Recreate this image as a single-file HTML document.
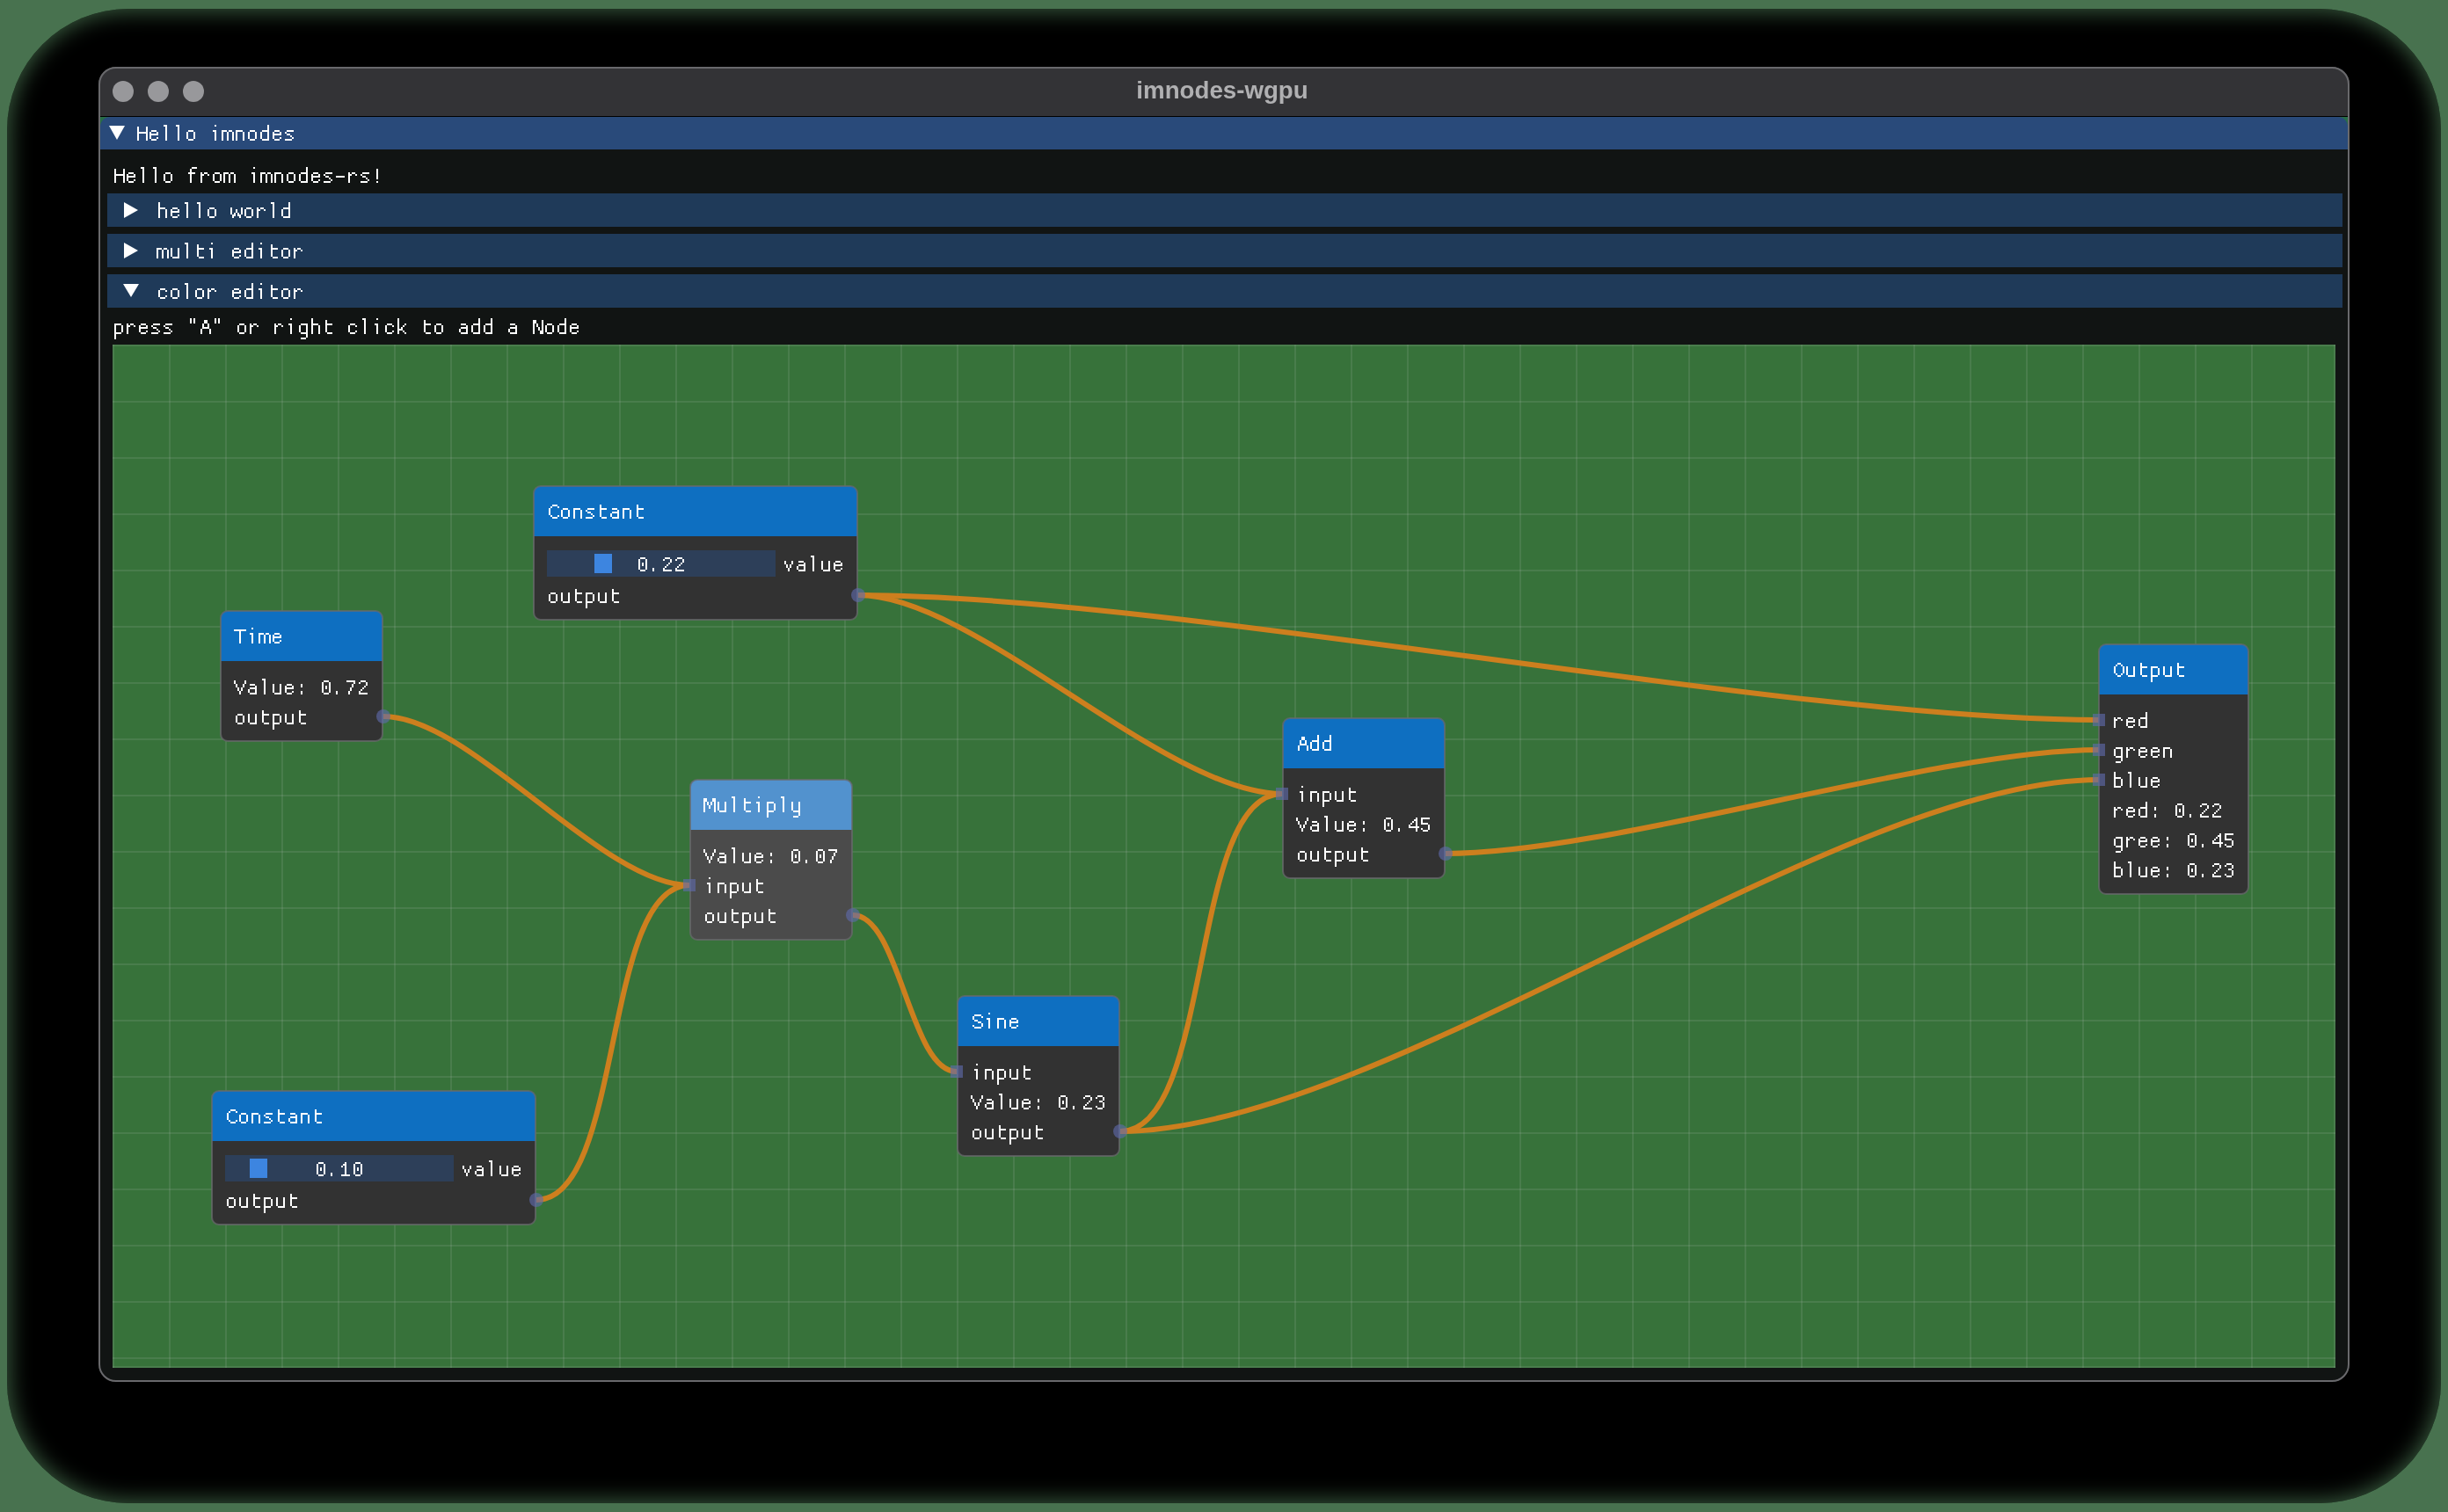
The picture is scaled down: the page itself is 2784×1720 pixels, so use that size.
<!DOCTYPE html><html><head><meta charset="utf-8"><style>
html,body{margin:0;padding:0;width:2784px;height:1720px;overflow:hidden;background:rgb(72,114,79);position:relative}
.r{position:absolute}

</style></head><body>
<div class="r" style="left:8px;top:10px;width:2768px;height:1700px;background:#000;border-radius:138px;box-shadow:inset 0 0 26px 2px rgba(72,114,79,0.85)"></div>
<div class="r" style="left:112px;top:76px;width:2560px;height:1496px;border-radius:20px;overflow:hidden;background:rgb(17,20,19)">
<div class="r" style="left:0;top:0;width:2560px;height:56px;background:rgb(51,51,54)"></div>
<div class="r" style="left:0;top:56px;width:2560px;height:1px;background:#000"></div>
<div class="r" style="left:16px;top:16px;width:24px;height:24px;border-radius:12px;background:rgb(152,152,155)"></div>
<div class="r" style="left:56px;top:16px;width:24px;height:24px;border-radius:12px;background:rgb(152,152,155)"></div>
<div class="r" style="left:96px;top:16px;width:24px;height:24px;border-radius:12px;background:rgb(152,152,155)"></div>
<div class="r" style="left:0;top:12px;width:2560px;text-align:center;font-family:'Liberation Sans',sans-serif;font-weight:bold;font-size:27.7px;line-height:30px;color:rgb(176,176,178);will-change:transform"><span style="position:relative;left:-2px">imnodes-wgpu</span></div>
<div class="r" style="left:0;top:57px;width:2560px;height:20px;background:rgb(40,110,70)"></div>
<div class="r" style="left:2px;top:57px;width:2556px;height:37px;background:rgb(41,74,122);border-radius:11px 11px 0 0"></div>
</div>
<div class="r" style="left:112px;top:76px;width:2556px;height:1492px;border:2px solid rgb(105,105,108);border-radius:20px"></div>
<svg class="r" style="left:124px;top:143px" width="18" height="16"><polygon points="0,0 18,0 9.0,16" fill="#fff"/></svg>
<svg class="r" style="left:154px;top:142px" width="182" height="24" shape-rendering="crispEdges"><path fill="#fff" d="M2 2h2v2h-2zM12 2h2v2h-2zM2 4h2v2h-2zM12 4h2v2h-2zM2 6h2v2h-2zM12 6h2v2h-2zM2 8h12v2h-12zM2 10h2v2h-2zM12 10h2v2h-2zM2 12h2v2h-2zM12 12h2v2h-2zM2 14h2v2h-2zM12 14h2v2h-2zM2 16h2v2h-2zM12 16h2v2h-2zM18 6h6v2h-6zM16 8h2v2h-2zM24 8h2v2h-2zM16 10h10v2h-10zM16 12h2v2h-2zM16 14h2v2h-2zM24 14h2v2h-2zM18 16h6v2h-6zM32 0h4v2h-4zM34 2h2v2h-2zM34 4h2v2h-2zM34 6h2v2h-2zM34 8h2v2h-2zM34 10h2v2h-2zM34 12h2v2h-2zM34 14h2v2h-2zM34 16h2v2h-2zM46 0h4v2h-4zM48 2h2v2h-2zM48 4h2v2h-2zM48 6h2v2h-2zM48 8h2v2h-2zM48 10h2v2h-2zM48 12h2v2h-2zM48 14h2v2h-2zM48 16h2v2h-2zM60 6h6v2h-6zM58 8h2v2h-2zM66 8h2v2h-2zM58 10h2v2h-2zM66 10h2v2h-2zM58 12h2v2h-2zM66 12h2v2h-2zM58 14h2v2h-2zM66 14h2v2h-2zM60 16h6v2h-6zM90 0h2v2h-2zM88 6h4v2h-4zM90 8h2v2h-2zM90 10h2v2h-2zM90 12h2v2h-2zM90 14h2v2h-2zM90 16h2v2h-2zM98 6h6v2h-6zM106 6h4v2h-4zM98 8h2v2h-2zM104 8h2v2h-2zM110 8h2v2h-2zM98 10h2v2h-2zM104 10h2v2h-2zM110 10h2v2h-2zM98 12h2v2h-2zM104 12h2v2h-2zM110 12h2v2h-2zM98 14h2v2h-2zM104 14h2v2h-2zM110 14h2v2h-2zM98 16h2v2h-2zM104 16h2v2h-2zM110 16h2v2h-2zM114 6h8v2h-8zM114 8h2v2h-2zM122 8h2v2h-2zM114 10h2v2h-2zM122 10h2v2h-2zM114 12h2v2h-2zM122 12h2v2h-2zM114 14h2v2h-2zM122 14h2v2h-2zM114 16h2v2h-2zM122 16h2v2h-2zM130 6h6v2h-6zM128 8h2v2h-2zM136 8h2v2h-2zM128 10h2v2h-2zM136 10h2v2h-2zM128 12h2v2h-2zM136 12h2v2h-2zM128 14h2v2h-2zM136 14h2v2h-2zM130 16h6v2h-6zM150 0h2v2h-2zM150 2h2v2h-2zM150 4h2v2h-2zM144 6h8v2h-8zM142 8h2v2h-2zM150 8h2v2h-2zM142 10h2v2h-2zM150 10h2v2h-2zM142 12h2v2h-2zM150 12h2v2h-2zM142 14h2v2h-2zM150 14h2v2h-2zM144 16h8v2h-8zM158 6h6v2h-6zM156 8h2v2h-2zM164 8h2v2h-2zM156 10h10v2h-10zM156 12h2v2h-2zM156 14h2v2h-2zM164 14h2v2h-2zM158 16h6v2h-6zM172 6h8v2h-8zM170 8h2v2h-2zM172 10h4v2h-4zM176 12h2v2h-2zM178 14h2v2h-2zM170 16h8v2h-8z"/></svg>
<svg class="r" style="left:128px;top:190px" width="308" height="24" shape-rendering="crispEdges"><path fill="#fff" d="M2 2h2v2h-2zM12 2h2v2h-2zM2 4h2v2h-2zM12 4h2v2h-2zM2 6h2v2h-2zM12 6h2v2h-2zM2 8h12v2h-12zM2 10h2v2h-2zM12 10h2v2h-2zM2 12h2v2h-2zM12 12h2v2h-2zM2 14h2v2h-2zM12 14h2v2h-2zM2 16h2v2h-2zM12 16h2v2h-2zM18 6h6v2h-6zM16 8h2v2h-2zM24 8h2v2h-2zM16 10h10v2h-10zM16 12h2v2h-2zM16 14h2v2h-2zM24 14h2v2h-2zM18 16h6v2h-6zM32 0h4v2h-4zM34 2h2v2h-2zM34 4h2v2h-2zM34 6h2v2h-2zM34 8h2v2h-2zM34 10h2v2h-2zM34 12h2v2h-2zM34 14h2v2h-2zM34 16h2v2h-2zM46 0h4v2h-4zM48 2h2v2h-2zM48 4h2v2h-2zM48 6h2v2h-2zM48 8h2v2h-2zM48 10h2v2h-2zM48 12h2v2h-2zM48 14h2v2h-2zM48 16h2v2h-2zM60 6h6v2h-6zM58 8h2v2h-2zM66 8h2v2h-2zM58 10h2v2h-2zM66 10h2v2h-2zM58 12h2v2h-2zM66 12h2v2h-2zM58 14h2v2h-2zM66 14h2v2h-2zM60 16h6v2h-6zM90 0h6v2h-6zM88 2h2v2h-2zM88 4h2v2h-2zM86 6h8v2h-8zM88 8h2v2h-2zM88 10h2v2h-2zM88 12h2v2h-2zM88 14h2v2h-2zM88 16h2v2h-2zM100 6h2v2h-2zM104 6h4v2h-4zM100 8h4v2h-4zM108 8h2v2h-2zM100 10h2v2h-2zM100 12h2v2h-2zM100 14h2v2h-2zM100 16h2v2h-2zM116 6h6v2h-6zM114 8h2v2h-2zM122 8h2v2h-2zM114 10h2v2h-2zM122 10h2v2h-2zM114 12h2v2h-2zM122 12h2v2h-2zM114 14h2v2h-2zM122 14h2v2h-2zM116 16h6v2h-6zM126 6h6v2h-6zM134 6h4v2h-4zM126 8h2v2h-2zM132 8h2v2h-2zM138 8h2v2h-2zM126 10h2v2h-2zM132 10h2v2h-2zM138 10h2v2h-2zM126 12h2v2h-2zM132 12h2v2h-2zM138 12h2v2h-2zM126 14h2v2h-2zM132 14h2v2h-2zM138 14h2v2h-2zM126 16h2v2h-2zM132 16h2v2h-2zM138 16h2v2h-2zM160 0h2v2h-2zM158 6h4v2h-4zM160 8h2v2h-2zM160 10h2v2h-2zM160 12h2v2h-2zM160 14h2v2h-2zM160 16h2v2h-2zM168 6h6v2h-6zM176 6h4v2h-4zM168 8h2v2h-2zM174 8h2v2h-2zM180 8h2v2h-2zM168 10h2v2h-2zM174 10h2v2h-2zM180 10h2v2h-2zM168 12h2v2h-2zM174 12h2v2h-2zM180 12h2v2h-2zM168 14h2v2h-2zM174 14h2v2h-2zM180 14h2v2h-2zM168 16h2v2h-2zM174 16h2v2h-2zM180 16h2v2h-2zM184 6h8v2h-8zM184 8h2v2h-2zM192 8h2v2h-2zM184 10h2v2h-2zM192 10h2v2h-2zM184 12h2v2h-2zM192 12h2v2h-2zM184 14h2v2h-2zM192 14h2v2h-2zM184 16h2v2h-2zM192 16h2v2h-2zM200 6h6v2h-6zM198 8h2v2h-2zM206 8h2v2h-2zM198 10h2v2h-2zM206 10h2v2h-2zM198 12h2v2h-2zM206 12h2v2h-2zM198 14h2v2h-2zM206 14h2v2h-2zM200 16h6v2h-6zM220 0h2v2h-2zM220 2h2v2h-2zM220 4h2v2h-2zM214 6h8v2h-8zM212 8h2v2h-2zM220 8h2v2h-2zM212 10h2v2h-2zM220 10h2v2h-2zM212 12h2v2h-2zM220 12h2v2h-2zM212 14h2v2h-2zM220 14h2v2h-2zM214 16h8v2h-8zM228 6h6v2h-6zM226 8h2v2h-2zM234 8h2v2h-2zM226 10h10v2h-10zM226 12h2v2h-2zM226 14h2v2h-2zM234 14h2v2h-2zM228 16h6v2h-6zM242 6h8v2h-8zM240 8h2v2h-2zM242 10h4v2h-4zM246 12h2v2h-2zM248 14h2v2h-2zM240 16h8v2h-8zM254 10h10v2h-10zM268 6h2v2h-2zM272 6h4v2h-4zM268 8h4v2h-4zM276 8h2v2h-2zM268 10h2v2h-2zM268 12h2v2h-2zM268 14h2v2h-2zM268 16h2v2h-2zM284 6h8v2h-8zM282 8h2v2h-2zM284 10h4v2h-4zM288 12h2v2h-2zM290 14h2v2h-2zM282 16h8v2h-8zM300 2h2v2h-2zM300 4h2v2h-2zM300 6h2v2h-2zM300 8h2v2h-2zM300 10h2v2h-2zM300 12h2v2h-2zM300 16h2v2h-2z"/></svg>
<div class="r" style="left:122px;top:220px;width:2542px;height:38px;background:rgb(31,58,89);"></div>
<svg class="r" style="left:141px;top:230px" width="16" height="18"><polygon points="0,0 16,9.0 0,18" fill="#fff"/></svg>
<svg class="r" style="left:178px;top:230px" width="154" height="24" shape-rendering="crispEdges"><path fill="#fff" d="M2 0h2v2h-2zM2 2h2v2h-2zM2 4h2v2h-2zM2 6h8v2h-8zM2 8h2v2h-2zM10 8h2v2h-2zM2 10h2v2h-2zM10 10h2v2h-2zM2 12h2v2h-2zM10 12h2v2h-2zM2 14h2v2h-2zM10 14h2v2h-2zM2 16h2v2h-2zM10 16h2v2h-2zM18 6h6v2h-6zM16 8h2v2h-2zM24 8h2v2h-2zM16 10h10v2h-10zM16 12h2v2h-2zM16 14h2v2h-2zM24 14h2v2h-2zM18 16h6v2h-6zM32 0h4v2h-4zM34 2h2v2h-2zM34 4h2v2h-2zM34 6h2v2h-2zM34 8h2v2h-2zM34 10h2v2h-2zM34 12h2v2h-2zM34 14h2v2h-2zM34 16h2v2h-2zM46 0h4v2h-4zM48 2h2v2h-2zM48 4h2v2h-2zM48 6h2v2h-2zM48 8h2v2h-2zM48 10h2v2h-2zM48 12h2v2h-2zM48 14h2v2h-2zM48 16h2v2h-2zM60 6h6v2h-6zM58 8h2v2h-2zM66 8h2v2h-2zM58 10h2v2h-2zM66 10h2v2h-2zM58 12h2v2h-2zM66 12h2v2h-2zM58 14h2v2h-2zM66 14h2v2h-2zM60 16h6v2h-6zM84 6h2v2h-2zM96 6h2v2h-2zM84 8h2v2h-2zM90 8h2v2h-2zM96 8h2v2h-2zM84 10h2v2h-2zM90 10h2v2h-2zM96 10h2v2h-2zM84 12h2v2h-2zM88 12h2v2h-2zM92 12h2v2h-2zM96 12h2v2h-2zM86 14h4v2h-4zM92 14h4v2h-4zM86 16h2v2h-2zM94 16h2v2h-2zM102 6h6v2h-6zM100 8h2v2h-2zM108 8h2v2h-2zM100 10h2v2h-2zM108 10h2v2h-2zM100 12h2v2h-2zM108 12h2v2h-2zM100 14h2v2h-2zM108 14h2v2h-2zM102 16h6v2h-6zM114 6h2v2h-2zM118 6h4v2h-4zM114 8h4v2h-4zM122 8h2v2h-2zM114 10h2v2h-2zM114 12h2v2h-2zM114 14h2v2h-2zM114 16h2v2h-2zM130 0h4v2h-4zM132 2h2v2h-2zM132 4h2v2h-2zM132 6h2v2h-2zM132 8h2v2h-2zM132 10h2v2h-2zM132 12h2v2h-2zM132 14h2v2h-2zM132 16h2v2h-2zM150 0h2v2h-2zM150 2h2v2h-2zM150 4h2v2h-2zM144 6h8v2h-8zM142 8h2v2h-2zM150 8h2v2h-2zM142 10h2v2h-2zM150 10h2v2h-2zM142 12h2v2h-2zM150 12h2v2h-2zM142 14h2v2h-2zM150 14h2v2h-2zM144 16h8v2h-8z"/></svg>
<div class="r" style="left:122px;top:266px;width:2542px;height:38px;background:rgb(31,58,89);"></div>
<svg class="r" style="left:141px;top:276px" width="16" height="18"><polygon points="0,0 16,9.0 0,18" fill="#fff"/></svg>
<svg class="r" style="left:178px;top:276px" width="168" height="24" shape-rendering="crispEdges"><path fill="#fff" d="M0 6h6v2h-6zM8 6h4v2h-4zM0 8h2v2h-2zM6 8h2v2h-2zM12 8h2v2h-2zM0 10h2v2h-2zM6 10h2v2h-2zM12 10h2v2h-2zM0 12h2v2h-2zM6 12h2v2h-2zM12 12h2v2h-2zM0 14h2v2h-2zM6 14h2v2h-2zM12 14h2v2h-2zM0 16h2v2h-2zM6 16h2v2h-2zM12 16h2v2h-2zM16 6h2v2h-2zM24 6h2v2h-2zM16 8h2v2h-2zM24 8h2v2h-2zM16 10h2v2h-2zM24 10h2v2h-2zM16 12h2v2h-2zM24 12h2v2h-2zM16 14h2v2h-2zM24 14h2v2h-2zM18 16h8v2h-8zM32 0h4v2h-4zM34 2h2v2h-2zM34 4h2v2h-2zM34 6h2v2h-2zM34 8h2v2h-2zM34 10h2v2h-2zM34 12h2v2h-2zM34 14h2v2h-2zM34 16h2v2h-2zM46 2h2v2h-2zM46 4h2v2h-2zM46 6h8v2h-8zM46 8h2v2h-2zM46 10h2v2h-2zM46 12h2v2h-2zM46 14h2v2h-2zM48 16h6v2h-6zM62 0h2v2h-2zM60 6h4v2h-4zM62 8h2v2h-2zM62 10h2v2h-2zM62 12h2v2h-2zM62 14h2v2h-2zM62 16h2v2h-2zM88 6h6v2h-6zM86 8h2v2h-2zM94 8h2v2h-2zM86 10h10v2h-10zM86 12h2v2h-2zM86 14h2v2h-2zM94 14h2v2h-2zM88 16h6v2h-6zM108 0h2v2h-2zM108 2h2v2h-2zM108 4h2v2h-2zM102 6h8v2h-8zM100 8h2v2h-2zM108 8h2v2h-2zM100 10h2v2h-2zM108 10h2v2h-2zM100 12h2v2h-2zM108 12h2v2h-2zM100 14h2v2h-2zM108 14h2v2h-2zM102 16h8v2h-8zM118 0h2v2h-2zM116 6h4v2h-4zM118 8h2v2h-2zM118 10h2v2h-2zM118 12h2v2h-2zM118 14h2v2h-2zM118 16h2v2h-2zM130 2h2v2h-2zM130 4h2v2h-2zM130 6h8v2h-8zM130 8h2v2h-2zM130 10h2v2h-2zM130 12h2v2h-2zM130 14h2v2h-2zM132 16h6v2h-6zM144 6h6v2h-6zM142 8h2v2h-2zM150 8h2v2h-2zM142 10h2v2h-2zM150 10h2v2h-2zM142 12h2v2h-2zM150 12h2v2h-2zM142 14h2v2h-2zM150 14h2v2h-2zM144 16h6v2h-6zM156 6h2v2h-2zM160 6h4v2h-4zM156 8h4v2h-4zM164 8h2v2h-2zM156 10h2v2h-2zM156 12h2v2h-2zM156 14h2v2h-2zM156 16h2v2h-2z"/></svg>
<div class="r" style="left:122px;top:312px;width:2542px;height:38px;background:rgb(31,58,89);"></div>
<svg class="r" style="left:140px;top:323px" width="18" height="15"><polygon points="0,0 18,0 9.0,15" fill="#fff"/></svg>
<svg class="r" style="left:178px;top:322px" width="168" height="24" shape-rendering="crispEdges"><path fill="#fff" d="M4 6h6v2h-6zM2 8h2v2h-2zM10 8h2v2h-2zM2 10h2v2h-2zM2 12h2v2h-2zM2 14h2v2h-2zM10 14h2v2h-2zM4 16h6v2h-6zM18 6h6v2h-6zM16 8h2v2h-2zM24 8h2v2h-2zM16 10h2v2h-2zM24 10h2v2h-2zM16 12h2v2h-2zM24 12h2v2h-2zM16 14h2v2h-2zM24 14h2v2h-2zM18 16h6v2h-6zM32 0h4v2h-4zM34 2h2v2h-2zM34 4h2v2h-2zM34 6h2v2h-2zM34 8h2v2h-2zM34 10h2v2h-2zM34 12h2v2h-2zM34 14h2v2h-2zM34 16h2v2h-2zM46 6h6v2h-6zM44 8h2v2h-2zM52 8h2v2h-2zM44 10h2v2h-2zM52 10h2v2h-2zM44 12h2v2h-2zM52 12h2v2h-2zM44 14h2v2h-2zM52 14h2v2h-2zM46 16h6v2h-6zM58 6h2v2h-2zM62 6h4v2h-4zM58 8h4v2h-4zM66 8h2v2h-2zM58 10h2v2h-2zM58 12h2v2h-2zM58 14h2v2h-2zM58 16h2v2h-2zM88 6h6v2h-6zM86 8h2v2h-2zM94 8h2v2h-2zM86 10h10v2h-10zM86 12h2v2h-2zM86 14h2v2h-2zM94 14h2v2h-2zM88 16h6v2h-6zM108 0h2v2h-2zM108 2h2v2h-2zM108 4h2v2h-2zM102 6h8v2h-8zM100 8h2v2h-2zM108 8h2v2h-2zM100 10h2v2h-2zM108 10h2v2h-2zM100 12h2v2h-2zM108 12h2v2h-2zM100 14h2v2h-2zM108 14h2v2h-2zM102 16h8v2h-8zM118 0h2v2h-2zM116 6h4v2h-4zM118 8h2v2h-2zM118 10h2v2h-2zM118 12h2v2h-2zM118 14h2v2h-2zM118 16h2v2h-2zM130 2h2v2h-2zM130 4h2v2h-2zM130 6h8v2h-8zM130 8h2v2h-2zM130 10h2v2h-2zM130 12h2v2h-2zM130 14h2v2h-2zM132 16h6v2h-6zM144 6h6v2h-6zM142 8h2v2h-2zM150 8h2v2h-2zM142 10h2v2h-2zM150 10h2v2h-2zM142 12h2v2h-2zM150 12h2v2h-2zM142 14h2v2h-2zM150 14h2v2h-2zM144 16h6v2h-6zM156 6h2v2h-2zM160 6h4v2h-4zM156 8h4v2h-4zM164 8h2v2h-2zM156 10h2v2h-2zM156 12h2v2h-2zM156 14h2v2h-2zM156 16h2v2h-2z"/></svg>
<svg class="r" style="left:128px;top:362px" width="532" height="24" shape-rendering="crispEdges"><path fill="#fff" d="M2 6h8v2h-8zM2 8h2v2h-2zM10 8h2v2h-2zM2 10h2v2h-2zM10 10h2v2h-2zM2 12h2v2h-2zM10 12h2v2h-2zM2 14h2v2h-2zM10 14h2v2h-2zM2 16h8v2h-8zM2 18h2v2h-2zM2 20h2v2h-2zM2 22h2v2h-2zM16 6h2v2h-2zM20 6h4v2h-4zM16 8h4v2h-4zM24 8h2v2h-2zM16 10h2v2h-2zM16 12h2v2h-2zM16 14h2v2h-2zM16 16h2v2h-2zM32 6h6v2h-6zM30 8h2v2h-2zM38 8h2v2h-2zM30 10h10v2h-10zM30 12h2v2h-2zM30 14h2v2h-2zM38 14h2v2h-2zM32 16h6v2h-6zM46 6h8v2h-8zM44 8h2v2h-2zM46 10h4v2h-4zM50 12h2v2h-2zM52 14h2v2h-2zM44 16h8v2h-8zM60 6h8v2h-8zM58 8h2v2h-2zM60 10h4v2h-4zM64 12h2v2h-2zM66 14h2v2h-2zM58 16h8v2h-8zM88 0h2v2h-2zM92 0h2v2h-2zM88 2h2v2h-2zM92 2h2v2h-2zM88 4h2v2h-2zM92 4h2v2h-2zM104 2h4v2h-4zM104 4h4v2h-4zM102 6h2v2h-2zM108 6h2v2h-2zM102 8h2v2h-2zM108 8h2v2h-2zM102 10h8v2h-8zM100 12h2v2h-2zM110 12h2v2h-2zM100 14h2v2h-2zM110 14h2v2h-2zM100 16h2v2h-2zM110 16h2v2h-2zM116 0h2v2h-2zM120 0h2v2h-2zM116 2h2v2h-2zM120 2h2v2h-2zM116 4h2v2h-2zM120 4h2v2h-2zM144 6h6v2h-6zM142 8h2v2h-2zM150 8h2v2h-2zM142 10h2v2h-2zM150 10h2v2h-2zM142 12h2v2h-2zM150 12h2v2h-2zM142 14h2v2h-2zM150 14h2v2h-2zM144 16h6v2h-6zM156 6h2v2h-2zM160 6h4v2h-4zM156 8h4v2h-4zM164 8h2v2h-2zM156 10h2v2h-2zM156 12h2v2h-2zM156 14h2v2h-2zM156 16h2v2h-2zM184 6h2v2h-2zM188 6h4v2h-4zM184 8h4v2h-4zM192 8h2v2h-2zM184 10h2v2h-2zM184 12h2v2h-2zM184 14h2v2h-2zM184 16h2v2h-2zM202 0h2v2h-2zM200 6h4v2h-4zM202 8h2v2h-2zM202 10h2v2h-2zM202 12h2v2h-2zM202 14h2v2h-2zM202 16h2v2h-2zM214 6h8v2h-8zM212 8h2v2h-2zM220 8h2v2h-2zM212 10h2v2h-2zM220 10h2v2h-2zM212 12h2v2h-2zM220 12h2v2h-2zM212 14h2v2h-2zM220 14h2v2h-2zM214 16h8v2h-8zM220 18h2v2h-2zM220 20h2v2h-2zM214 22h6v2h-6zM226 0h2v2h-2zM226 2h2v2h-2zM226 4h2v2h-2zM226 6h8v2h-8zM226 8h2v2h-2zM234 8h2v2h-2zM226 10h2v2h-2zM234 10h2v2h-2zM226 12h2v2h-2zM234 12h2v2h-2zM226 14h2v2h-2zM234 14h2v2h-2zM226 16h2v2h-2zM234 16h2v2h-2zM242 2h2v2h-2zM242 4h2v2h-2zM242 6h8v2h-8zM242 8h2v2h-2zM242 10h2v2h-2zM242 12h2v2h-2zM242 14h2v2h-2zM244 16h6v2h-6zM270 6h6v2h-6zM268 8h2v2h-2zM276 8h2v2h-2zM268 10h2v2h-2zM268 12h2v2h-2zM268 14h2v2h-2zM276 14h2v2h-2zM270 16h6v2h-6zM284 0h4v2h-4zM286 2h2v2h-2zM286 4h2v2h-2zM286 6h2v2h-2zM286 8h2v2h-2zM286 10h2v2h-2zM286 12h2v2h-2zM286 14h2v2h-2zM286 16h2v2h-2zM300 0h2v2h-2zM298 6h4v2h-4zM300 8h2v2h-2zM300 10h2v2h-2zM300 12h2v2h-2zM300 14h2v2h-2zM300 16h2v2h-2zM312 6h6v2h-6zM310 8h2v2h-2zM318 8h2v2h-2zM310 10h2v2h-2zM310 12h2v2h-2zM310 14h2v2h-2zM318 14h2v2h-2zM312 16h6v2h-6zM324 0h2v2h-2zM324 2h2v2h-2zM324 4h2v2h-2zM324 6h2v2h-2zM332 6h2v2h-2zM324 8h2v2h-2zM330 8h2v2h-2zM324 10h2v2h-2zM328 10h2v2h-2zM324 12h6v2h-6zM324 14h2v2h-2zM330 14h2v2h-2zM324 16h2v2h-2zM332 16h2v2h-2zM354 2h2v2h-2zM354 4h2v2h-2zM354 6h8v2h-8zM354 8h2v2h-2zM354 10h2v2h-2zM354 12h2v2h-2zM354 14h2v2h-2zM356 16h6v2h-6zM368 6h6v2h-6zM366 8h2v2h-2zM374 8h2v2h-2zM366 10h2v2h-2zM374 10h2v2h-2zM366 12h2v2h-2zM374 12h2v2h-2zM366 14h2v2h-2zM374 14h2v2h-2zM368 16h6v2h-6zM396 6h6v2h-6zM402 8h2v2h-2zM396 10h8v2h-8zM394 12h2v2h-2zM402 12h2v2h-2zM394 14h2v2h-2zM402 14h2v2h-2zM396 16h8v2h-8zM416 0h2v2h-2zM416 2h2v2h-2zM416 4h2v2h-2zM410 6h8v2h-8zM408 8h2v2h-2zM416 8h2v2h-2zM408 10h2v2h-2zM416 10h2v2h-2zM408 12h2v2h-2zM416 12h2v2h-2zM408 14h2v2h-2zM416 14h2v2h-2zM410 16h8v2h-8zM430 0h2v2h-2zM430 2h2v2h-2zM430 4h2v2h-2zM424 6h8v2h-8zM422 8h2v2h-2zM430 8h2v2h-2zM422 10h2v2h-2zM430 10h2v2h-2zM422 12h2v2h-2zM430 12h2v2h-2zM422 14h2v2h-2zM430 14h2v2h-2zM424 16h8v2h-8zM452 6h6v2h-6zM458 8h2v2h-2zM452 10h8v2h-8zM450 12h2v2h-2zM458 12h2v2h-2zM450 14h2v2h-2zM458 14h2v2h-2zM452 16h8v2h-8zM478 2h4v2h-4zM488 2h2v2h-2zM478 4h4v2h-4zM488 4h2v2h-2zM478 6h2v2h-2zM482 6h2v2h-2zM488 6h2v2h-2zM478 8h2v2h-2zM482 8h2v2h-2zM488 8h2v2h-2zM478 10h2v2h-2zM484 10h2v2h-2zM488 10h2v2h-2zM478 12h2v2h-2zM484 12h2v2h-2zM488 12h2v2h-2zM478 14h2v2h-2zM486 14h4v2h-4zM478 16h2v2h-2zM486 16h4v2h-4zM494 6h6v2h-6zM492 8h2v2h-2zM500 8h2v2h-2zM492 10h2v2h-2zM500 10h2v2h-2zM492 12h2v2h-2zM500 12h2v2h-2zM492 14h2v2h-2zM500 14h2v2h-2zM494 16h6v2h-6zM514 0h2v2h-2zM514 2h2v2h-2zM514 4h2v2h-2zM508 6h8v2h-8zM506 8h2v2h-2zM514 8h2v2h-2zM506 10h2v2h-2zM514 10h2v2h-2zM506 12h2v2h-2zM514 12h2v2h-2zM506 14h2v2h-2zM514 14h2v2h-2zM508 16h8v2h-8zM522 6h6v2h-6zM520 8h2v2h-2zM528 8h2v2h-2zM520 10h10v2h-10zM520 12h2v2h-2zM520 14h2v2h-2zM528 14h2v2h-2zM522 16h6v2h-6z"/></svg>
<svg class="r" style="left:128px;top:392px" width="2528" height="1164"><rect x="0" y="0" width="2528" height="1164" fill="rgb(55,114,58)"/><rect x="0" y="0" width="2" height="1164" fill="rgba(200,200,200,0.13)"/><rect x="64" y="0" width="2" height="1164" fill="rgba(200,200,200,0.13)"/><rect x="128" y="0" width="2" height="1164" fill="rgba(200,200,200,0.13)"/><rect x="192" y="0" width="2" height="1164" fill="rgba(200,200,200,0.13)"/><rect x="256" y="0" width="2" height="1164" fill="rgba(200,200,200,0.13)"/><rect x="320" y="0" width="2" height="1164" fill="rgba(200,200,200,0.13)"/><rect x="384" y="0" width="2" height="1164" fill="rgba(200,200,200,0.13)"/><rect x="448" y="0" width="2" height="1164" fill="rgba(200,200,200,0.13)"/><rect x="512" y="0" width="2" height="1164" fill="rgba(200,200,200,0.13)"/><rect x="576" y="0" width="2" height="1164" fill="rgba(200,200,200,0.13)"/><rect x="640" y="0" width="2" height="1164" fill="rgba(200,200,200,0.13)"/><rect x="704" y="0" width="2" height="1164" fill="rgba(200,200,200,0.13)"/><rect x="768" y="0" width="2" height="1164" fill="rgba(200,200,200,0.13)"/><rect x="832" y="0" width="2" height="1164" fill="rgba(200,200,200,0.13)"/><rect x="896" y="0" width="2" height="1164" fill="rgba(200,200,200,0.13)"/><rect x="960" y="0" width="2" height="1164" fill="rgba(200,200,200,0.13)"/><rect x="1024" y="0" width="2" height="1164" fill="rgba(200,200,200,0.13)"/><rect x="1088" y="0" width="2" height="1164" fill="rgba(200,200,200,0.13)"/><rect x="1152" y="0" width="2" height="1164" fill="rgba(200,200,200,0.13)"/><rect x="1216" y="0" width="2" height="1164" fill="rgba(200,200,200,0.13)"/><rect x="1280" y="0" width="2" height="1164" fill="rgba(200,200,200,0.13)"/><rect x="1344" y="0" width="2" height="1164" fill="rgba(200,200,200,0.13)"/><rect x="1408" y="0" width="2" height="1164" fill="rgba(200,200,200,0.13)"/><rect x="1472" y="0" width="2" height="1164" fill="rgba(200,200,200,0.13)"/><rect x="1536" y="0" width="2" height="1164" fill="rgba(200,200,200,0.13)"/><rect x="1600" y="0" width="2" height="1164" fill="rgba(200,200,200,0.13)"/><rect x="1664" y="0" width="2" height="1164" fill="rgba(200,200,200,0.13)"/><rect x="1728" y="0" width="2" height="1164" fill="rgba(200,200,200,0.13)"/><rect x="1792" y="0" width="2" height="1164" fill="rgba(200,200,200,0.13)"/><rect x="1856" y="0" width="2" height="1164" fill="rgba(200,200,200,0.13)"/><rect x="1920" y="0" width="2" height="1164" fill="rgba(200,200,200,0.13)"/><rect x="1984" y="0" width="2" height="1164" fill="rgba(200,200,200,0.13)"/><rect x="2048" y="0" width="2" height="1164" fill="rgba(200,200,200,0.13)"/><rect x="2112" y="0" width="2" height="1164" fill="rgba(200,200,200,0.13)"/><rect x="2176" y="0" width="2" height="1164" fill="rgba(200,200,200,0.13)"/><rect x="2240" y="0" width="2" height="1164" fill="rgba(200,200,200,0.13)"/><rect x="2304" y="0" width="2" height="1164" fill="rgba(200,200,200,0.13)"/><rect x="2368" y="0" width="2" height="1164" fill="rgba(200,200,200,0.13)"/><rect x="2432" y="0" width="2" height="1164" fill="rgba(200,200,200,0.13)"/><rect x="2496" y="0" width="2" height="1164" fill="rgba(200,200,200,0.13)"/><rect x="0" y="0" width="2528" height="2" fill="rgba(200,200,200,0.13)"/><rect x="0" y="64" width="2528" height="2" fill="rgba(200,200,200,0.13)"/><rect x="0" y="128" width="2528" height="2" fill="rgba(200,200,200,0.13)"/><rect x="0" y="192" width="2528" height="2" fill="rgba(200,200,200,0.13)"/><rect x="0" y="256" width="2528" height="2" fill="rgba(200,200,200,0.13)"/><rect x="0" y="320" width="2528" height="2" fill="rgba(200,200,200,0.13)"/><rect x="0" y="384" width="2528" height="2" fill="rgba(200,200,200,0.13)"/><rect x="0" y="448" width="2528" height="2" fill="rgba(200,200,200,0.13)"/><rect x="0" y="512" width="2528" height="2" fill="rgba(200,200,200,0.13)"/><rect x="0" y="576" width="2528" height="2" fill="rgba(200,200,200,0.13)"/><rect x="0" y="640" width="2528" height="2" fill="rgba(200,200,200,0.13)"/><rect x="0" y="704" width="2528" height="2" fill="rgba(200,200,200,0.13)"/><rect x="0" y="768" width="2528" height="2" fill="rgba(200,200,200,0.13)"/><rect x="0" y="832" width="2528" height="2" fill="rgba(200,200,200,0.13)"/><rect x="0" y="896" width="2528" height="2" fill="rgba(200,200,200,0.13)"/><rect x="0" y="960" width="2528" height="2" fill="rgba(200,200,200,0.13)"/><rect x="0" y="1024" width="2528" height="2" fill="rgba(200,200,200,0.13)"/><rect x="0" y="1088" width="2528" height="2" fill="rgba(200,200,200,0.13)"/><rect x="0" y="1152" width="2528" height="2" fill="rgba(200,200,200,0.13)"/><rect x="2526" y="0" width="2" height="1164" fill="rgba(200,200,200,0.13)"/><rect x="0" y="1162" width="2528" height="2" fill="rgba(200,200,200,0.13)"/><path d="M848.0,285.0 C1202.5,285.0 1904.5,427.0 2259.0,427.0" stroke="rgb(205,127,30)" stroke-width="6" fill="none"/><path d="M848.0,285.0 C981.1,285.0 1196.9,511.0 1330.0,511.0" stroke="rgb(205,127,30)" stroke-width="6" fill="none"/><path d="M308.0,423.0 C407.4,423.0 556.6,615.0 656.0,615.0" stroke="rgb(205,127,30)" stroke-width="6" fill="none"/><path d="M482.0,973.0 C581.5,973.0 556.5,615.0 656.0,615.0" stroke="rgb(205,127,30)" stroke-width="6" fill="none"/><path d="M842.0,649.0 C895.4,649.0 906.6,827.0 960.0,827.0" stroke="rgb(205,127,30)" stroke-width="6" fill="none"/><path d="M1146.0,895.0 C1252.5,895.0 1223.5,511.0 1330.0,511.0" stroke="rgb(205,127,30)" stroke-width="6" fill="none"/><path d="M1146.0,895.0 C1441.7,895.0 1963.3,495.0 2259.0,495.0" stroke="rgb(205,127,30)" stroke-width="6" fill="none"/><path d="M1516.0,579.0 C1704.1,579.0 2070.9,461.0 2259.0,461.0" stroke="rgb(205,127,30)" stroke-width="6" fill="none"/></svg>
<div class="r" style="left:607px;top:553px;width:368px;height:152px;border-radius:8px;background:rgb(50,50,50);overflow:hidden"><div class="r" style="left:0;top:0;width:100%;height:57px;background:rgb(14,111,193)"></div></div>
<div class="r" style="left:606px;top:552px;width:366px;height:150px;border:2px solid rgba(105,105,110,0.72);border-radius:9px"></div>
<svg class="r" style="left:622px;top:572px" width="112" height="24" shape-rendering="crispEdges"><path fill="#fff" d="M6 2h6v2h-6zM4 4h2v2h-2zM12 4h2v2h-2zM2 6h2v2h-2zM2 8h2v2h-2zM2 10h2v2h-2zM2 12h2v2h-2zM4 14h2v2h-2zM12 14h2v2h-2zM6 16h6v2h-6zM18 6h6v2h-6zM16 8h2v2h-2zM24 8h2v2h-2zM16 10h2v2h-2zM24 10h2v2h-2zM16 12h2v2h-2zM24 12h2v2h-2zM16 14h2v2h-2zM24 14h2v2h-2zM18 16h6v2h-6zM30 6h8v2h-8zM30 8h2v2h-2zM38 8h2v2h-2zM30 10h2v2h-2zM38 10h2v2h-2zM30 12h2v2h-2zM38 12h2v2h-2zM30 14h2v2h-2zM38 14h2v2h-2zM30 16h2v2h-2zM38 16h2v2h-2zM46 6h8v2h-8zM44 8h2v2h-2zM46 10h4v2h-4zM50 12h2v2h-2zM52 14h2v2h-2zM44 16h8v2h-8zM60 2h2v2h-2zM60 4h2v2h-2zM60 6h8v2h-8zM60 8h2v2h-2zM60 10h2v2h-2zM60 12h2v2h-2zM60 14h2v2h-2zM62 16h6v2h-6zM74 6h6v2h-6zM80 8h2v2h-2zM74 10h8v2h-8zM72 12h2v2h-2zM80 12h2v2h-2zM72 14h2v2h-2zM80 14h2v2h-2zM74 16h8v2h-8zM86 6h8v2h-8zM86 8h2v2h-2zM94 8h2v2h-2zM86 10h2v2h-2zM94 10h2v2h-2zM86 12h2v2h-2zM94 12h2v2h-2zM86 14h2v2h-2zM94 14h2v2h-2zM86 16h2v2h-2zM94 16h2v2h-2zM102 2h2v2h-2zM102 4h2v2h-2zM102 6h8v2h-8zM102 8h2v2h-2zM102 10h2v2h-2zM102 12h2v2h-2zM102 14h2v2h-2zM104 16h6v2h-6z"/></svg>
<div class="r" style="left:622px;top:626px;width:260px;height:30px;background:rgb(45,63,89);"></div>
<div class="r" style="left:676px;top:630px;width:20px;height:22px;background:rgb(61,133,224);"></div>
<svg class="r" style="left:724px;top:632px" width="56" height="24" shape-rendering="crispEdges"><path fill="#fff" d="M4 2h6v2h-6zM2 4h2v2h-2zM10 4h2v2h-2zM2 6h2v2h-2zM10 6h2v2h-2zM2 8h2v2h-2zM6 8h2v2h-2zM10 8h2v2h-2zM2 10h2v2h-2zM6 10h2v2h-2zM10 10h2v2h-2zM2 12h2v2h-2zM10 12h2v2h-2zM2 14h2v2h-2zM10 14h2v2h-2zM4 16h6v2h-6zM18 14h2v2h-2zM18 16h2v2h-2zM32 2h6v2h-6zM30 4h2v2h-2zM38 4h2v2h-2zM38 6h2v2h-2zM36 8h2v2h-2zM34 10h2v2h-2zM32 12h2v2h-2zM30 14h2v2h-2zM30 16h10v2h-10zM46 2h6v2h-6zM44 4h2v2h-2zM52 4h2v2h-2zM52 6h2v2h-2zM50 8h2v2h-2zM48 10h2v2h-2zM46 12h2v2h-2zM44 14h2v2h-2zM44 16h10v2h-10z"/></svg>
<svg class="r" style="left:890px;top:632px" width="70" height="24" shape-rendering="crispEdges"><path fill="#fff" d="M2 6h2v2h-2zM10 6h2v2h-2zM2 8h2v2h-2zM10 8h2v2h-2zM4 10h2v2h-2zM8 10h2v2h-2zM4 12h2v2h-2zM8 12h2v2h-2zM6 14h2v2h-2zM6 16h2v2h-2zM18 6h6v2h-6zM24 8h2v2h-2zM18 10h8v2h-8zM16 12h2v2h-2zM24 12h2v2h-2zM16 14h2v2h-2zM24 14h2v2h-2zM18 16h8v2h-8zM32 0h4v2h-4zM34 2h2v2h-2zM34 4h2v2h-2zM34 6h2v2h-2zM34 8h2v2h-2zM34 10h2v2h-2zM34 12h2v2h-2zM34 14h2v2h-2zM34 16h2v2h-2zM44 6h2v2h-2zM52 6h2v2h-2zM44 8h2v2h-2zM52 8h2v2h-2zM44 10h2v2h-2zM52 10h2v2h-2zM44 12h2v2h-2zM52 12h2v2h-2zM44 14h2v2h-2zM52 14h2v2h-2zM46 16h8v2h-8zM60 6h6v2h-6zM58 8h2v2h-2zM66 8h2v2h-2zM58 10h10v2h-10zM58 12h2v2h-2zM58 14h2v2h-2zM66 14h2v2h-2zM60 16h6v2h-6z"/></svg>
<svg class="r" style="left:622px;top:668px" width="84" height="24" shape-rendering="crispEdges"><path fill="#fff" d="M4 6h6v2h-6zM2 8h2v2h-2zM10 8h2v2h-2zM2 10h2v2h-2zM10 10h2v2h-2zM2 12h2v2h-2zM10 12h2v2h-2zM2 14h2v2h-2zM10 14h2v2h-2zM4 16h6v2h-6zM16 6h2v2h-2zM24 6h2v2h-2zM16 8h2v2h-2zM24 8h2v2h-2zM16 10h2v2h-2zM24 10h2v2h-2zM16 12h2v2h-2zM24 12h2v2h-2zM16 14h2v2h-2zM24 14h2v2h-2zM18 16h8v2h-8zM32 2h2v2h-2zM32 4h2v2h-2zM32 6h8v2h-8zM32 8h2v2h-2zM32 10h2v2h-2zM32 12h2v2h-2zM32 14h2v2h-2zM34 16h6v2h-6zM44 6h8v2h-8zM44 8h2v2h-2zM52 8h2v2h-2zM44 10h2v2h-2zM52 10h2v2h-2zM44 12h2v2h-2zM52 12h2v2h-2zM44 14h2v2h-2zM52 14h2v2h-2zM44 16h8v2h-8zM44 18h2v2h-2zM44 20h2v2h-2zM44 22h2v2h-2zM58 6h2v2h-2zM66 6h2v2h-2zM58 8h2v2h-2zM66 8h2v2h-2zM58 10h2v2h-2zM66 10h2v2h-2zM58 12h2v2h-2zM66 12h2v2h-2zM58 14h2v2h-2zM66 14h2v2h-2zM60 16h8v2h-8zM74 2h2v2h-2zM74 4h2v2h-2zM74 6h8v2h-8zM74 8h2v2h-2zM74 10h2v2h-2zM74 12h2v2h-2zM74 14h2v2h-2zM76 16h6v2h-6z"/></svg>
<div class="r" style="left:251px;top:695px;width:184px;height:148px;border-radius:8px;background:rgb(50,50,50);overflow:hidden"><div class="r" style="left:0;top:0;width:100%;height:57px;background:rgb(14,111,193)"></div></div>
<div class="r" style="left:250px;top:694px;width:182px;height:146px;border:2px solid rgba(105,105,110,0.72);border-radius:9px"></div>
<svg class="r" style="left:266px;top:714px" width="56" height="24" shape-rendering="crispEdges"><path fill="#fff" d="M0 2h14v2h-14zM6 4h2v2h-2zM6 6h2v2h-2zM6 8h2v2h-2zM6 10h2v2h-2zM6 12h2v2h-2zM6 14h2v2h-2zM6 16h2v2h-2zM20 0h2v2h-2zM18 6h4v2h-4zM20 8h2v2h-2zM20 10h2v2h-2zM20 12h2v2h-2zM20 14h2v2h-2zM20 16h2v2h-2zM28 6h6v2h-6zM36 6h4v2h-4zM28 8h2v2h-2zM34 8h2v2h-2zM40 8h2v2h-2zM28 10h2v2h-2zM34 10h2v2h-2zM40 10h2v2h-2zM28 12h2v2h-2zM34 12h2v2h-2zM40 12h2v2h-2zM28 14h2v2h-2zM34 14h2v2h-2zM40 14h2v2h-2zM28 16h2v2h-2zM34 16h2v2h-2zM40 16h2v2h-2zM46 6h6v2h-6zM44 8h2v2h-2zM52 8h2v2h-2zM44 10h10v2h-10zM44 12h2v2h-2zM44 14h2v2h-2zM52 14h2v2h-2zM46 16h6v2h-6z"/></svg>
<svg class="r" style="left:266px;top:772px" width="154" height="24" shape-rendering="crispEdges"><path fill="#fff" d="M0 2h2v2h-2zM12 2h2v2h-2zM0 4h2v2h-2zM12 4h2v2h-2zM2 6h2v2h-2zM10 6h2v2h-2zM2 8h2v2h-2zM10 8h2v2h-2zM4 10h2v2h-2zM8 10h2v2h-2zM4 12h2v2h-2zM8 12h2v2h-2zM6 14h2v2h-2zM6 16h2v2h-2zM18 6h6v2h-6zM24 8h2v2h-2zM18 10h8v2h-8zM16 12h2v2h-2zM24 12h2v2h-2zM16 14h2v2h-2zM24 14h2v2h-2zM18 16h8v2h-8zM32 0h4v2h-4zM34 2h2v2h-2zM34 4h2v2h-2zM34 6h2v2h-2zM34 8h2v2h-2zM34 10h2v2h-2zM34 12h2v2h-2zM34 14h2v2h-2zM34 16h2v2h-2zM44 6h2v2h-2zM52 6h2v2h-2zM44 8h2v2h-2zM52 8h2v2h-2zM44 10h2v2h-2zM52 10h2v2h-2zM44 12h2v2h-2zM52 12h2v2h-2zM44 14h2v2h-2zM52 14h2v2h-2zM46 16h8v2h-8zM60 6h6v2h-6zM58 8h2v2h-2zM66 8h2v2h-2zM58 10h10v2h-10zM58 12h2v2h-2zM58 14h2v2h-2zM66 14h2v2h-2zM60 16h6v2h-6zM76 6h2v2h-2zM76 8h2v2h-2zM76 14h2v2h-2zM76 16h2v2h-2zM102 2h6v2h-6zM100 4h2v2h-2zM108 4h2v2h-2zM100 6h2v2h-2zM108 6h2v2h-2zM100 8h2v2h-2zM104 8h2v2h-2zM108 8h2v2h-2zM100 10h2v2h-2zM104 10h2v2h-2zM108 10h2v2h-2zM100 12h2v2h-2zM108 12h2v2h-2zM100 14h2v2h-2zM108 14h2v2h-2zM102 16h6v2h-6zM116 14h2v2h-2zM116 16h2v2h-2zM128 2h10v2h-10zM136 4h2v2h-2zM134 6h2v2h-2zM134 8h2v2h-2zM132 10h2v2h-2zM132 12h2v2h-2zM130 14h2v2h-2zM130 16h2v2h-2zM144 2h6v2h-6zM142 4h2v2h-2zM150 4h2v2h-2zM150 6h2v2h-2zM148 8h2v2h-2zM146 10h2v2h-2zM144 12h2v2h-2zM142 14h2v2h-2zM142 16h10v2h-10z"/></svg>
<svg class="r" style="left:266px;top:806px" width="84" height="24" shape-rendering="crispEdges"><path fill="#fff" d="M4 6h6v2h-6zM2 8h2v2h-2zM10 8h2v2h-2zM2 10h2v2h-2zM10 10h2v2h-2zM2 12h2v2h-2zM10 12h2v2h-2zM2 14h2v2h-2zM10 14h2v2h-2zM4 16h6v2h-6zM16 6h2v2h-2zM24 6h2v2h-2zM16 8h2v2h-2zM24 8h2v2h-2zM16 10h2v2h-2zM24 10h2v2h-2zM16 12h2v2h-2zM24 12h2v2h-2zM16 14h2v2h-2zM24 14h2v2h-2zM18 16h8v2h-8zM32 2h2v2h-2zM32 4h2v2h-2zM32 6h8v2h-8zM32 8h2v2h-2zM32 10h2v2h-2zM32 12h2v2h-2zM32 14h2v2h-2zM34 16h6v2h-6zM44 6h8v2h-8zM44 8h2v2h-2zM52 8h2v2h-2zM44 10h2v2h-2zM52 10h2v2h-2zM44 12h2v2h-2zM52 12h2v2h-2zM44 14h2v2h-2zM52 14h2v2h-2zM44 16h8v2h-8zM44 18h2v2h-2zM44 20h2v2h-2zM44 22h2v2h-2zM58 6h2v2h-2zM66 6h2v2h-2zM58 8h2v2h-2zM66 8h2v2h-2zM58 10h2v2h-2zM66 10h2v2h-2zM58 12h2v2h-2zM66 12h2v2h-2zM58 14h2v2h-2zM66 14h2v2h-2zM60 16h8v2h-8zM74 2h2v2h-2zM74 4h2v2h-2zM74 6h8v2h-8zM74 8h2v2h-2zM74 10h2v2h-2zM74 12h2v2h-2zM74 14h2v2h-2zM76 16h6v2h-6z"/></svg>
<div class="r" style="left:785px;top:887px;width:184px;height:182px;border-radius:8px;background:rgb(75,75,75);overflow:hidden"><div class="r" style="left:0;top:0;width:100%;height:57px;background:rgb(82,146,206)"></div></div>
<div class="r" style="left:784px;top:886px;width:182px;height:180px;border:2px solid rgba(105,105,110,0.72);border-radius:9px"></div>
<svg class="r" style="left:800px;top:906px" width="112" height="24" shape-rendering="crispEdges"><path fill="#fff" d="M0 2h4v2h-4zM10 2h4v2h-4zM0 4h4v2h-4zM10 4h4v2h-4zM0 6h2v2h-2zM4 6h2v2h-2zM8 6h2v2h-2zM12 6h2v2h-2zM0 8h2v2h-2zM4 8h2v2h-2zM8 8h2v2h-2zM12 8h2v2h-2zM0 10h2v2h-2zM6 10h2v2h-2zM12 10h2v2h-2zM0 12h2v2h-2zM6 12h2v2h-2zM12 12h2v2h-2zM0 14h2v2h-2zM12 14h2v2h-2zM0 16h2v2h-2zM12 16h2v2h-2zM16 6h2v2h-2zM24 6h2v2h-2zM16 8h2v2h-2zM24 8h2v2h-2zM16 10h2v2h-2zM24 10h2v2h-2zM16 12h2v2h-2zM24 12h2v2h-2zM16 14h2v2h-2zM24 14h2v2h-2zM18 16h8v2h-8zM32 0h4v2h-4zM34 2h2v2h-2zM34 4h2v2h-2zM34 6h2v2h-2zM34 8h2v2h-2zM34 10h2v2h-2zM34 12h2v2h-2zM34 14h2v2h-2zM34 16h2v2h-2zM46 2h2v2h-2zM46 4h2v2h-2zM46 6h8v2h-8zM46 8h2v2h-2zM46 10h2v2h-2zM46 12h2v2h-2zM46 14h2v2h-2zM48 16h6v2h-6zM62 0h2v2h-2zM60 6h4v2h-4zM62 8h2v2h-2zM62 10h2v2h-2zM62 12h2v2h-2zM62 14h2v2h-2zM62 16h2v2h-2zM72 6h8v2h-8zM72 8h2v2h-2zM80 8h2v2h-2zM72 10h2v2h-2zM80 10h2v2h-2zM72 12h2v2h-2zM80 12h2v2h-2zM72 14h2v2h-2zM80 14h2v2h-2zM72 16h8v2h-8zM72 18h2v2h-2zM72 20h2v2h-2zM72 22h2v2h-2zM88 0h4v2h-4zM90 2h2v2h-2zM90 4h2v2h-2zM90 6h2v2h-2zM90 8h2v2h-2zM90 10h2v2h-2zM90 12h2v2h-2zM90 14h2v2h-2zM90 16h2v2h-2zM100 6h2v2h-2zM108 6h2v2h-2zM100 8h2v2h-2zM108 8h2v2h-2zM100 10h2v2h-2zM108 10h2v2h-2zM100 12h2v2h-2zM108 12h2v2h-2zM100 14h2v2h-2zM108 14h2v2h-2zM102 16h8v2h-8zM108 18h2v2h-2zM108 20h2v2h-2zM102 22h6v2h-6z"/></svg>
<svg class="r" style="left:800px;top:964px" width="154" height="24" shape-rendering="crispEdges"><path fill="#fff" d="M0 2h2v2h-2zM12 2h2v2h-2zM0 4h2v2h-2zM12 4h2v2h-2zM2 6h2v2h-2zM10 6h2v2h-2zM2 8h2v2h-2zM10 8h2v2h-2zM4 10h2v2h-2zM8 10h2v2h-2zM4 12h2v2h-2zM8 12h2v2h-2zM6 14h2v2h-2zM6 16h2v2h-2zM18 6h6v2h-6zM24 8h2v2h-2zM18 10h8v2h-8zM16 12h2v2h-2zM24 12h2v2h-2zM16 14h2v2h-2zM24 14h2v2h-2zM18 16h8v2h-8zM32 0h4v2h-4zM34 2h2v2h-2zM34 4h2v2h-2zM34 6h2v2h-2zM34 8h2v2h-2zM34 10h2v2h-2zM34 12h2v2h-2zM34 14h2v2h-2zM34 16h2v2h-2zM44 6h2v2h-2zM52 6h2v2h-2zM44 8h2v2h-2zM52 8h2v2h-2zM44 10h2v2h-2zM52 10h2v2h-2zM44 12h2v2h-2zM52 12h2v2h-2zM44 14h2v2h-2zM52 14h2v2h-2zM46 16h8v2h-8zM60 6h6v2h-6zM58 8h2v2h-2zM66 8h2v2h-2zM58 10h10v2h-10zM58 12h2v2h-2zM58 14h2v2h-2zM66 14h2v2h-2zM60 16h6v2h-6zM76 6h2v2h-2zM76 8h2v2h-2zM76 14h2v2h-2zM76 16h2v2h-2zM102 2h6v2h-6zM100 4h2v2h-2zM108 4h2v2h-2zM100 6h2v2h-2zM108 6h2v2h-2zM100 8h2v2h-2zM104 8h2v2h-2zM108 8h2v2h-2zM100 10h2v2h-2zM104 10h2v2h-2zM108 10h2v2h-2zM100 12h2v2h-2zM108 12h2v2h-2zM100 14h2v2h-2zM108 14h2v2h-2zM102 16h6v2h-6zM116 14h2v2h-2zM116 16h2v2h-2zM130 2h6v2h-6zM128 4h2v2h-2zM136 4h2v2h-2zM128 6h2v2h-2zM136 6h2v2h-2zM128 8h2v2h-2zM132 8h2v2h-2zM136 8h2v2h-2zM128 10h2v2h-2zM132 10h2v2h-2zM136 10h2v2h-2zM128 12h2v2h-2zM136 12h2v2h-2zM128 14h2v2h-2zM136 14h2v2h-2zM130 16h6v2h-6zM142 2h10v2h-10zM150 4h2v2h-2zM148 6h2v2h-2zM148 8h2v2h-2zM146 10h2v2h-2zM146 12h2v2h-2zM144 14h2v2h-2zM144 16h2v2h-2z"/></svg>
<svg class="r" style="left:800px;top:998px" width="70" height="24" shape-rendering="crispEdges"><path fill="#fff" d="M6 0h2v2h-2zM4 6h4v2h-4zM6 8h2v2h-2zM6 10h2v2h-2zM6 12h2v2h-2zM6 14h2v2h-2zM6 16h2v2h-2zM16 6h8v2h-8zM16 8h2v2h-2zM24 8h2v2h-2zM16 10h2v2h-2zM24 10h2v2h-2zM16 12h2v2h-2zM24 12h2v2h-2zM16 14h2v2h-2zM24 14h2v2h-2zM16 16h2v2h-2zM24 16h2v2h-2zM30 6h8v2h-8zM30 8h2v2h-2zM38 8h2v2h-2zM30 10h2v2h-2zM38 10h2v2h-2zM30 12h2v2h-2zM38 12h2v2h-2zM30 14h2v2h-2zM38 14h2v2h-2zM30 16h8v2h-8zM30 18h2v2h-2zM30 20h2v2h-2zM30 22h2v2h-2zM44 6h2v2h-2zM52 6h2v2h-2zM44 8h2v2h-2zM52 8h2v2h-2zM44 10h2v2h-2zM52 10h2v2h-2zM44 12h2v2h-2zM52 12h2v2h-2zM44 14h2v2h-2zM52 14h2v2h-2zM46 16h8v2h-8zM60 2h2v2h-2zM60 4h2v2h-2zM60 6h8v2h-8zM60 8h2v2h-2zM60 10h2v2h-2zM60 12h2v2h-2zM60 14h2v2h-2zM62 16h6v2h-6z"/></svg>
<svg class="r" style="left:800px;top:1032px" width="84" height="24" shape-rendering="crispEdges"><path fill="#fff" d="M4 6h6v2h-6zM2 8h2v2h-2zM10 8h2v2h-2zM2 10h2v2h-2zM10 10h2v2h-2zM2 12h2v2h-2zM10 12h2v2h-2zM2 14h2v2h-2zM10 14h2v2h-2zM4 16h6v2h-6zM16 6h2v2h-2zM24 6h2v2h-2zM16 8h2v2h-2zM24 8h2v2h-2zM16 10h2v2h-2zM24 10h2v2h-2zM16 12h2v2h-2zM24 12h2v2h-2zM16 14h2v2h-2zM24 14h2v2h-2zM18 16h8v2h-8zM32 2h2v2h-2zM32 4h2v2h-2zM32 6h8v2h-8zM32 8h2v2h-2zM32 10h2v2h-2zM32 12h2v2h-2zM32 14h2v2h-2zM34 16h6v2h-6zM44 6h8v2h-8zM44 8h2v2h-2zM52 8h2v2h-2zM44 10h2v2h-2zM52 10h2v2h-2zM44 12h2v2h-2zM52 12h2v2h-2zM44 14h2v2h-2zM52 14h2v2h-2zM44 16h8v2h-8zM44 18h2v2h-2zM44 20h2v2h-2zM44 22h2v2h-2zM58 6h2v2h-2zM66 6h2v2h-2zM58 8h2v2h-2zM66 8h2v2h-2zM58 10h2v2h-2zM66 10h2v2h-2zM58 12h2v2h-2zM66 12h2v2h-2zM58 14h2v2h-2zM66 14h2v2h-2zM60 16h8v2h-8zM74 2h2v2h-2zM74 4h2v2h-2zM74 6h8v2h-8zM74 8h2v2h-2zM74 10h2v2h-2zM74 12h2v2h-2zM74 14h2v2h-2zM76 16h6v2h-6z"/></svg>
<div class="r" style="left:1089px;top:1133px;width:184px;height:182px;border-radius:8px;background:rgb(50,50,50);overflow:hidden"><div class="r" style="left:0;top:0;width:100%;height:57px;background:rgb(14,111,193)"></div></div>
<div class="r" style="left:1088px;top:1132px;width:182px;height:180px;border:2px solid rgba(105,105,110,0.72);border-radius:9px"></div>
<svg class="r" style="left:1104px;top:1152px" width="56" height="24" shape-rendering="crispEdges"><path fill="#fff" d="M4 2h8v2h-8zM2 4h2v2h-2zM12 4h2v2h-2zM2 6h2v2h-2zM4 8h4v2h-4zM8 10h4v2h-4zM12 12h2v2h-2zM2 14h2v2h-2zM12 14h2v2h-2zM4 16h8v2h-8zM20 0h2v2h-2zM18 6h4v2h-4zM20 8h2v2h-2zM20 10h2v2h-2zM20 12h2v2h-2zM20 14h2v2h-2zM20 16h2v2h-2zM30 6h8v2h-8zM30 8h2v2h-2zM38 8h2v2h-2zM30 10h2v2h-2zM38 10h2v2h-2zM30 12h2v2h-2zM38 12h2v2h-2zM30 14h2v2h-2zM38 14h2v2h-2zM30 16h2v2h-2zM38 16h2v2h-2zM46 6h6v2h-6zM44 8h2v2h-2zM52 8h2v2h-2zM44 10h10v2h-10zM44 12h2v2h-2zM44 14h2v2h-2zM52 14h2v2h-2zM46 16h6v2h-6z"/></svg>
<svg class="r" style="left:1104px;top:1210px" width="70" height="24" shape-rendering="crispEdges"><path fill="#fff" d="M6 0h2v2h-2zM4 6h4v2h-4zM6 8h2v2h-2zM6 10h2v2h-2zM6 12h2v2h-2zM6 14h2v2h-2zM6 16h2v2h-2zM16 6h8v2h-8zM16 8h2v2h-2zM24 8h2v2h-2zM16 10h2v2h-2zM24 10h2v2h-2zM16 12h2v2h-2zM24 12h2v2h-2zM16 14h2v2h-2zM24 14h2v2h-2zM16 16h2v2h-2zM24 16h2v2h-2zM30 6h8v2h-8zM30 8h2v2h-2zM38 8h2v2h-2zM30 10h2v2h-2zM38 10h2v2h-2zM30 12h2v2h-2zM38 12h2v2h-2zM30 14h2v2h-2zM38 14h2v2h-2zM30 16h8v2h-8zM30 18h2v2h-2zM30 20h2v2h-2zM30 22h2v2h-2zM44 6h2v2h-2zM52 6h2v2h-2zM44 8h2v2h-2zM52 8h2v2h-2zM44 10h2v2h-2zM52 10h2v2h-2zM44 12h2v2h-2zM52 12h2v2h-2zM44 14h2v2h-2zM52 14h2v2h-2zM46 16h8v2h-8zM60 2h2v2h-2zM60 4h2v2h-2zM60 6h8v2h-8zM60 8h2v2h-2zM60 10h2v2h-2zM60 12h2v2h-2zM60 14h2v2h-2zM62 16h6v2h-6z"/></svg>
<svg class="r" style="left:1104px;top:1244px" width="154" height="24" shape-rendering="crispEdges"><path fill="#fff" d="M0 2h2v2h-2zM12 2h2v2h-2zM0 4h2v2h-2zM12 4h2v2h-2zM2 6h2v2h-2zM10 6h2v2h-2zM2 8h2v2h-2zM10 8h2v2h-2zM4 10h2v2h-2zM8 10h2v2h-2zM4 12h2v2h-2zM8 12h2v2h-2zM6 14h2v2h-2zM6 16h2v2h-2zM18 6h6v2h-6zM24 8h2v2h-2zM18 10h8v2h-8zM16 12h2v2h-2zM24 12h2v2h-2zM16 14h2v2h-2zM24 14h2v2h-2zM18 16h8v2h-8zM32 0h4v2h-4zM34 2h2v2h-2zM34 4h2v2h-2zM34 6h2v2h-2zM34 8h2v2h-2zM34 10h2v2h-2zM34 12h2v2h-2zM34 14h2v2h-2zM34 16h2v2h-2zM44 6h2v2h-2zM52 6h2v2h-2zM44 8h2v2h-2zM52 8h2v2h-2zM44 10h2v2h-2zM52 10h2v2h-2zM44 12h2v2h-2zM52 12h2v2h-2zM44 14h2v2h-2zM52 14h2v2h-2zM46 16h8v2h-8zM60 6h6v2h-6zM58 8h2v2h-2zM66 8h2v2h-2zM58 10h10v2h-10zM58 12h2v2h-2zM58 14h2v2h-2zM66 14h2v2h-2zM60 16h6v2h-6zM76 6h2v2h-2zM76 8h2v2h-2zM76 14h2v2h-2zM76 16h2v2h-2zM102 2h6v2h-6zM100 4h2v2h-2zM108 4h2v2h-2zM100 6h2v2h-2zM108 6h2v2h-2zM100 8h2v2h-2zM104 8h2v2h-2zM108 8h2v2h-2zM100 10h2v2h-2zM104 10h2v2h-2zM108 10h2v2h-2zM100 12h2v2h-2zM108 12h2v2h-2zM100 14h2v2h-2zM108 14h2v2h-2zM102 16h6v2h-6zM116 14h2v2h-2zM116 16h2v2h-2zM130 2h6v2h-6zM128 4h2v2h-2zM136 4h2v2h-2zM136 6h2v2h-2zM134 8h2v2h-2zM132 10h2v2h-2zM130 12h2v2h-2zM128 14h2v2h-2zM128 16h10v2h-10zM144 2h6v2h-6zM142 4h2v2h-2zM150 4h2v2h-2zM150 6h2v2h-2zM146 8h4v2h-4zM150 10h2v2h-2zM150 12h2v2h-2zM142 14h2v2h-2zM150 14h2v2h-2zM144 16h6v2h-6z"/></svg>
<svg class="r" style="left:1104px;top:1278px" width="84" height="24" shape-rendering="crispEdges"><path fill="#fff" d="M4 6h6v2h-6zM2 8h2v2h-2zM10 8h2v2h-2zM2 10h2v2h-2zM10 10h2v2h-2zM2 12h2v2h-2zM10 12h2v2h-2zM2 14h2v2h-2zM10 14h2v2h-2zM4 16h6v2h-6zM16 6h2v2h-2zM24 6h2v2h-2zM16 8h2v2h-2zM24 8h2v2h-2zM16 10h2v2h-2zM24 10h2v2h-2zM16 12h2v2h-2zM24 12h2v2h-2zM16 14h2v2h-2zM24 14h2v2h-2zM18 16h8v2h-8zM32 2h2v2h-2zM32 4h2v2h-2zM32 6h8v2h-8zM32 8h2v2h-2zM32 10h2v2h-2zM32 12h2v2h-2zM32 14h2v2h-2zM34 16h6v2h-6zM44 6h8v2h-8zM44 8h2v2h-2zM52 8h2v2h-2zM44 10h2v2h-2zM52 10h2v2h-2zM44 12h2v2h-2zM52 12h2v2h-2zM44 14h2v2h-2zM52 14h2v2h-2zM44 16h8v2h-8zM44 18h2v2h-2zM44 20h2v2h-2zM44 22h2v2h-2zM58 6h2v2h-2zM66 6h2v2h-2zM58 8h2v2h-2zM66 8h2v2h-2zM58 10h2v2h-2zM66 10h2v2h-2zM58 12h2v2h-2zM66 12h2v2h-2zM58 14h2v2h-2zM66 14h2v2h-2zM60 16h8v2h-8zM74 2h2v2h-2zM74 4h2v2h-2zM74 6h8v2h-8zM74 8h2v2h-2zM74 10h2v2h-2zM74 12h2v2h-2zM74 14h2v2h-2zM76 16h6v2h-6z"/></svg>
<div class="r" style="left:1459px;top:817px;width:184px;height:182px;border-radius:8px;background:rgb(50,50,50);overflow:hidden"><div class="r" style="left:0;top:0;width:100%;height:57px;background:rgb(14,111,193)"></div></div>
<div class="r" style="left:1458px;top:816px;width:182px;height:180px;border:2px solid rgba(105,105,110,0.72);border-radius:9px"></div>
<svg class="r" style="left:1474px;top:836px" width="42" height="24" shape-rendering="crispEdges"><path fill="#fff" d="M6 2h4v2h-4zM6 4h4v2h-4zM4 6h2v2h-2zM10 6h2v2h-2zM4 8h2v2h-2zM10 8h2v2h-2zM4 10h8v2h-8zM2 12h2v2h-2zM12 12h2v2h-2zM2 14h2v2h-2zM12 14h2v2h-2zM2 16h2v2h-2zM12 16h2v2h-2zM24 0h2v2h-2zM24 2h2v2h-2zM24 4h2v2h-2zM18 6h8v2h-8zM16 8h2v2h-2zM24 8h2v2h-2zM16 10h2v2h-2zM24 10h2v2h-2zM16 12h2v2h-2zM24 12h2v2h-2zM16 14h2v2h-2zM24 14h2v2h-2zM18 16h8v2h-8zM38 0h2v2h-2zM38 2h2v2h-2zM38 4h2v2h-2zM32 6h8v2h-8zM30 8h2v2h-2zM38 8h2v2h-2zM30 10h2v2h-2zM38 10h2v2h-2zM30 12h2v2h-2zM38 12h2v2h-2zM30 14h2v2h-2zM38 14h2v2h-2zM32 16h8v2h-8z"/></svg>
<svg class="r" style="left:1474px;top:894px" width="70" height="24" shape-rendering="crispEdges"><path fill="#fff" d="M6 0h2v2h-2zM4 6h4v2h-4zM6 8h2v2h-2zM6 10h2v2h-2zM6 12h2v2h-2zM6 14h2v2h-2zM6 16h2v2h-2zM16 6h8v2h-8zM16 8h2v2h-2zM24 8h2v2h-2zM16 10h2v2h-2zM24 10h2v2h-2zM16 12h2v2h-2zM24 12h2v2h-2zM16 14h2v2h-2zM24 14h2v2h-2zM16 16h2v2h-2zM24 16h2v2h-2zM30 6h8v2h-8zM30 8h2v2h-2zM38 8h2v2h-2zM30 10h2v2h-2zM38 10h2v2h-2zM30 12h2v2h-2zM38 12h2v2h-2zM30 14h2v2h-2zM38 14h2v2h-2zM30 16h8v2h-8zM30 18h2v2h-2zM30 20h2v2h-2zM30 22h2v2h-2zM44 6h2v2h-2zM52 6h2v2h-2zM44 8h2v2h-2zM52 8h2v2h-2zM44 10h2v2h-2zM52 10h2v2h-2zM44 12h2v2h-2zM52 12h2v2h-2zM44 14h2v2h-2zM52 14h2v2h-2zM46 16h8v2h-8zM60 2h2v2h-2zM60 4h2v2h-2zM60 6h8v2h-8zM60 8h2v2h-2zM60 10h2v2h-2zM60 12h2v2h-2zM60 14h2v2h-2zM62 16h6v2h-6z"/></svg>
<svg class="r" style="left:1474px;top:928px" width="154" height="24" shape-rendering="crispEdges"><path fill="#fff" d="M0 2h2v2h-2zM12 2h2v2h-2zM0 4h2v2h-2zM12 4h2v2h-2zM2 6h2v2h-2zM10 6h2v2h-2zM2 8h2v2h-2zM10 8h2v2h-2zM4 10h2v2h-2zM8 10h2v2h-2zM4 12h2v2h-2zM8 12h2v2h-2zM6 14h2v2h-2zM6 16h2v2h-2zM18 6h6v2h-6zM24 8h2v2h-2zM18 10h8v2h-8zM16 12h2v2h-2zM24 12h2v2h-2zM16 14h2v2h-2zM24 14h2v2h-2zM18 16h8v2h-8zM32 0h4v2h-4zM34 2h2v2h-2zM34 4h2v2h-2zM34 6h2v2h-2zM34 8h2v2h-2zM34 10h2v2h-2zM34 12h2v2h-2zM34 14h2v2h-2zM34 16h2v2h-2zM44 6h2v2h-2zM52 6h2v2h-2zM44 8h2v2h-2zM52 8h2v2h-2zM44 10h2v2h-2zM52 10h2v2h-2zM44 12h2v2h-2zM52 12h2v2h-2zM44 14h2v2h-2zM52 14h2v2h-2zM46 16h8v2h-8zM60 6h6v2h-6zM58 8h2v2h-2zM66 8h2v2h-2zM58 10h10v2h-10zM58 12h2v2h-2zM58 14h2v2h-2zM66 14h2v2h-2zM60 16h6v2h-6zM76 6h2v2h-2zM76 8h2v2h-2zM76 14h2v2h-2zM76 16h2v2h-2zM102 2h6v2h-6zM100 4h2v2h-2zM108 4h2v2h-2zM100 6h2v2h-2zM108 6h2v2h-2zM100 8h2v2h-2zM104 8h2v2h-2zM108 8h2v2h-2zM100 10h2v2h-2zM104 10h2v2h-2zM108 10h2v2h-2zM100 12h2v2h-2zM108 12h2v2h-2zM100 14h2v2h-2zM108 14h2v2h-2zM102 16h6v2h-6zM116 14h2v2h-2zM116 16h2v2h-2zM136 2h2v2h-2zM134 4h4v2h-4zM132 6h2v2h-2zM136 6h2v2h-2zM130 8h2v2h-2zM136 8h2v2h-2zM128 10h2v2h-2zM136 10h2v2h-2zM128 12h12v2h-12zM136 14h2v2h-2zM136 16h2v2h-2zM142 2h10v2h-10zM142 4h2v2h-2zM142 6h2v2h-2zM142 8h8v2h-8zM150 10h2v2h-2zM150 12h2v2h-2zM142 14h2v2h-2zM150 14h2v2h-2zM144 16h6v2h-6z"/></svg>
<svg class="r" style="left:1474px;top:962px" width="84" height="24" shape-rendering="crispEdges"><path fill="#fff" d="M4 6h6v2h-6zM2 8h2v2h-2zM10 8h2v2h-2zM2 10h2v2h-2zM10 10h2v2h-2zM2 12h2v2h-2zM10 12h2v2h-2zM2 14h2v2h-2zM10 14h2v2h-2zM4 16h6v2h-6zM16 6h2v2h-2zM24 6h2v2h-2zM16 8h2v2h-2zM24 8h2v2h-2zM16 10h2v2h-2zM24 10h2v2h-2zM16 12h2v2h-2zM24 12h2v2h-2zM16 14h2v2h-2zM24 14h2v2h-2zM18 16h8v2h-8zM32 2h2v2h-2zM32 4h2v2h-2zM32 6h8v2h-8zM32 8h2v2h-2zM32 10h2v2h-2zM32 12h2v2h-2zM32 14h2v2h-2zM34 16h6v2h-6zM44 6h8v2h-8zM44 8h2v2h-2zM52 8h2v2h-2zM44 10h2v2h-2zM52 10h2v2h-2zM44 12h2v2h-2zM52 12h2v2h-2zM44 14h2v2h-2zM52 14h2v2h-2zM44 16h8v2h-8zM44 18h2v2h-2zM44 20h2v2h-2zM44 22h2v2h-2zM58 6h2v2h-2zM66 6h2v2h-2zM58 8h2v2h-2zM66 8h2v2h-2zM58 10h2v2h-2zM66 10h2v2h-2zM58 12h2v2h-2zM66 12h2v2h-2zM58 14h2v2h-2zM66 14h2v2h-2zM60 16h8v2h-8zM74 2h2v2h-2zM74 4h2v2h-2zM74 6h8v2h-8zM74 8h2v2h-2zM74 10h2v2h-2zM74 12h2v2h-2zM74 14h2v2h-2zM76 16h6v2h-6z"/></svg>
<div class="r" style="left:2387px;top:733px;width:170px;height:284px;border-radius:8px;background:rgb(50,50,50);overflow:hidden"><div class="r" style="left:0;top:0;width:100%;height:57px;background:rgb(14,111,193)"></div></div>
<div class="r" style="left:2386px;top:732px;width:168px;height:282px;border:2px solid rgba(105,105,110,0.72);border-radius:9px"></div>
<svg class="r" style="left:2402px;top:752px" width="84" height="24" shape-rendering="crispEdges"><path fill="#fff" d="M6 2h4v2h-4zM4 4h2v2h-2zM10 4h2v2h-2zM2 6h2v2h-2zM12 6h2v2h-2zM2 8h2v2h-2zM12 8h2v2h-2zM2 10h2v2h-2zM12 10h2v2h-2zM2 12h2v2h-2zM12 12h2v2h-2zM4 14h2v2h-2zM10 14h2v2h-2zM6 16h4v2h-4zM16 6h2v2h-2zM24 6h2v2h-2zM16 8h2v2h-2zM24 8h2v2h-2zM16 10h2v2h-2zM24 10h2v2h-2zM16 12h2v2h-2zM24 12h2v2h-2zM16 14h2v2h-2zM24 14h2v2h-2zM18 16h8v2h-8zM32 2h2v2h-2zM32 4h2v2h-2zM32 6h8v2h-8zM32 8h2v2h-2zM32 10h2v2h-2zM32 12h2v2h-2zM32 14h2v2h-2zM34 16h6v2h-6zM44 6h8v2h-8zM44 8h2v2h-2zM52 8h2v2h-2zM44 10h2v2h-2zM52 10h2v2h-2zM44 12h2v2h-2zM52 12h2v2h-2zM44 14h2v2h-2zM52 14h2v2h-2zM44 16h8v2h-8zM44 18h2v2h-2zM44 20h2v2h-2zM44 22h2v2h-2zM58 6h2v2h-2zM66 6h2v2h-2zM58 8h2v2h-2zM66 8h2v2h-2zM58 10h2v2h-2zM66 10h2v2h-2zM58 12h2v2h-2zM66 12h2v2h-2zM58 14h2v2h-2zM66 14h2v2h-2zM60 16h8v2h-8zM74 2h2v2h-2zM74 4h2v2h-2zM74 6h8v2h-8zM74 8h2v2h-2zM74 10h2v2h-2zM74 12h2v2h-2zM74 14h2v2h-2zM76 16h6v2h-6z"/></svg>
<svg class="r" style="left:2402px;top:810px" width="42" height="24" shape-rendering="crispEdges"><path fill="#fff" d="M2 6h2v2h-2zM6 6h4v2h-4zM2 8h4v2h-4zM10 8h2v2h-2zM2 10h2v2h-2zM2 12h2v2h-2zM2 14h2v2h-2zM2 16h2v2h-2zM18 6h6v2h-6zM16 8h2v2h-2zM24 8h2v2h-2zM16 10h10v2h-10zM16 12h2v2h-2zM16 14h2v2h-2zM24 14h2v2h-2zM18 16h6v2h-6zM38 0h2v2h-2zM38 2h2v2h-2zM38 4h2v2h-2zM32 6h8v2h-8zM30 8h2v2h-2zM38 8h2v2h-2zM30 10h2v2h-2zM38 10h2v2h-2zM30 12h2v2h-2zM38 12h2v2h-2zM30 14h2v2h-2zM38 14h2v2h-2zM32 16h8v2h-8z"/></svg>
<svg class="r" style="left:2402px;top:844px" width="70" height="24" shape-rendering="crispEdges"><path fill="#fff" d="M4 6h8v2h-8zM2 8h2v2h-2zM10 8h2v2h-2zM2 10h2v2h-2zM10 10h2v2h-2zM2 12h2v2h-2zM10 12h2v2h-2zM2 14h2v2h-2zM10 14h2v2h-2zM4 16h8v2h-8zM10 18h2v2h-2zM10 20h2v2h-2zM4 22h6v2h-6zM16 6h2v2h-2zM20 6h4v2h-4zM16 8h4v2h-4zM24 8h2v2h-2zM16 10h2v2h-2zM16 12h2v2h-2zM16 14h2v2h-2zM16 16h2v2h-2zM32 6h6v2h-6zM30 8h2v2h-2zM38 8h2v2h-2zM30 10h10v2h-10zM30 12h2v2h-2zM30 14h2v2h-2zM38 14h2v2h-2zM32 16h6v2h-6zM46 6h6v2h-6zM44 8h2v2h-2zM52 8h2v2h-2zM44 10h10v2h-10zM44 12h2v2h-2zM44 14h2v2h-2zM52 14h2v2h-2zM46 16h6v2h-6zM58 6h8v2h-8zM58 8h2v2h-2zM66 8h2v2h-2zM58 10h2v2h-2zM66 10h2v2h-2zM58 12h2v2h-2zM66 12h2v2h-2zM58 14h2v2h-2zM66 14h2v2h-2zM58 16h2v2h-2zM66 16h2v2h-2z"/></svg>
<svg class="r" style="left:2402px;top:878px" width="56" height="24" shape-rendering="crispEdges"><path fill="#fff" d="M2 0h2v2h-2zM2 2h2v2h-2zM2 4h2v2h-2zM2 6h8v2h-8zM2 8h2v2h-2zM10 8h2v2h-2zM2 10h2v2h-2zM10 10h2v2h-2zM2 12h2v2h-2zM10 12h2v2h-2zM2 14h2v2h-2zM10 14h2v2h-2zM2 16h8v2h-8zM18 0h4v2h-4zM20 2h2v2h-2zM20 4h2v2h-2zM20 6h2v2h-2zM20 8h2v2h-2zM20 10h2v2h-2zM20 12h2v2h-2zM20 14h2v2h-2zM20 16h2v2h-2zM30 6h2v2h-2zM38 6h2v2h-2zM30 8h2v2h-2zM38 8h2v2h-2zM30 10h2v2h-2zM38 10h2v2h-2zM30 12h2v2h-2zM38 12h2v2h-2zM30 14h2v2h-2zM38 14h2v2h-2zM32 16h8v2h-8zM46 6h6v2h-6zM44 8h2v2h-2zM52 8h2v2h-2zM44 10h10v2h-10zM44 12h2v2h-2zM44 14h2v2h-2zM52 14h2v2h-2zM46 16h6v2h-6z"/></svg>
<svg class="r" style="left:2402px;top:912px" width="126" height="24" shape-rendering="crispEdges"><path fill="#fff" d="M2 6h2v2h-2zM6 6h4v2h-4zM2 8h4v2h-4zM10 8h2v2h-2zM2 10h2v2h-2zM2 12h2v2h-2zM2 14h2v2h-2zM2 16h2v2h-2zM18 6h6v2h-6zM16 8h2v2h-2zM24 8h2v2h-2zM16 10h10v2h-10zM16 12h2v2h-2zM16 14h2v2h-2zM24 14h2v2h-2zM18 16h6v2h-6zM38 0h2v2h-2zM38 2h2v2h-2zM38 4h2v2h-2zM32 6h8v2h-8zM30 8h2v2h-2zM38 8h2v2h-2zM30 10h2v2h-2zM38 10h2v2h-2zM30 12h2v2h-2zM38 12h2v2h-2zM30 14h2v2h-2zM38 14h2v2h-2zM32 16h8v2h-8zM48 6h2v2h-2zM48 8h2v2h-2zM48 14h2v2h-2zM48 16h2v2h-2zM74 2h6v2h-6zM72 4h2v2h-2zM80 4h2v2h-2zM72 6h2v2h-2zM80 6h2v2h-2zM72 8h2v2h-2zM76 8h2v2h-2zM80 8h2v2h-2zM72 10h2v2h-2zM76 10h2v2h-2zM80 10h2v2h-2zM72 12h2v2h-2zM80 12h2v2h-2zM72 14h2v2h-2zM80 14h2v2h-2zM74 16h6v2h-6zM88 14h2v2h-2zM88 16h2v2h-2zM102 2h6v2h-6zM100 4h2v2h-2zM108 4h2v2h-2zM108 6h2v2h-2zM106 8h2v2h-2zM104 10h2v2h-2zM102 12h2v2h-2zM100 14h2v2h-2zM100 16h10v2h-10zM116 2h6v2h-6zM114 4h2v2h-2zM122 4h2v2h-2zM122 6h2v2h-2zM120 8h2v2h-2zM118 10h2v2h-2zM116 12h2v2h-2zM114 14h2v2h-2zM114 16h10v2h-10z"/></svg>
<svg class="r" style="left:2402px;top:946px" width="140" height="24" shape-rendering="crispEdges"><path fill="#fff" d="M4 6h8v2h-8zM2 8h2v2h-2zM10 8h2v2h-2zM2 10h2v2h-2zM10 10h2v2h-2zM2 12h2v2h-2zM10 12h2v2h-2zM2 14h2v2h-2zM10 14h2v2h-2zM4 16h8v2h-8zM10 18h2v2h-2zM10 20h2v2h-2zM4 22h6v2h-6zM16 6h2v2h-2zM20 6h4v2h-4zM16 8h4v2h-4zM24 8h2v2h-2zM16 10h2v2h-2zM16 12h2v2h-2zM16 14h2v2h-2zM16 16h2v2h-2zM32 6h6v2h-6zM30 8h2v2h-2zM38 8h2v2h-2zM30 10h10v2h-10zM30 12h2v2h-2zM30 14h2v2h-2zM38 14h2v2h-2zM32 16h6v2h-6zM46 6h6v2h-6zM44 8h2v2h-2zM52 8h2v2h-2zM44 10h10v2h-10zM44 12h2v2h-2zM44 14h2v2h-2zM52 14h2v2h-2zM46 16h6v2h-6zM62 6h2v2h-2zM62 8h2v2h-2zM62 14h2v2h-2zM62 16h2v2h-2zM88 2h6v2h-6zM86 4h2v2h-2zM94 4h2v2h-2zM86 6h2v2h-2zM94 6h2v2h-2zM86 8h2v2h-2zM90 8h2v2h-2zM94 8h2v2h-2zM86 10h2v2h-2zM90 10h2v2h-2zM94 10h2v2h-2zM86 12h2v2h-2zM94 12h2v2h-2zM86 14h2v2h-2zM94 14h2v2h-2zM88 16h6v2h-6zM102 14h2v2h-2zM102 16h2v2h-2zM122 2h2v2h-2zM120 4h4v2h-4zM118 6h2v2h-2zM122 6h2v2h-2zM116 8h2v2h-2zM122 8h2v2h-2zM114 10h2v2h-2zM122 10h2v2h-2zM114 12h12v2h-12zM122 14h2v2h-2zM122 16h2v2h-2zM128 2h10v2h-10zM128 4h2v2h-2zM128 6h2v2h-2zM128 8h8v2h-8zM136 10h2v2h-2zM136 12h2v2h-2zM128 14h2v2h-2zM136 14h2v2h-2zM130 16h6v2h-6z"/></svg>
<svg class="r" style="left:2402px;top:980px" width="140" height="24" shape-rendering="crispEdges"><path fill="#fff" d="M2 0h2v2h-2zM2 2h2v2h-2zM2 4h2v2h-2zM2 6h8v2h-8zM2 8h2v2h-2zM10 8h2v2h-2zM2 10h2v2h-2zM10 10h2v2h-2zM2 12h2v2h-2zM10 12h2v2h-2zM2 14h2v2h-2zM10 14h2v2h-2zM2 16h8v2h-8zM18 0h4v2h-4zM20 2h2v2h-2zM20 4h2v2h-2zM20 6h2v2h-2zM20 8h2v2h-2zM20 10h2v2h-2zM20 12h2v2h-2zM20 14h2v2h-2zM20 16h2v2h-2zM30 6h2v2h-2zM38 6h2v2h-2zM30 8h2v2h-2zM38 8h2v2h-2zM30 10h2v2h-2zM38 10h2v2h-2zM30 12h2v2h-2zM38 12h2v2h-2zM30 14h2v2h-2zM38 14h2v2h-2zM32 16h8v2h-8zM46 6h6v2h-6zM44 8h2v2h-2zM52 8h2v2h-2zM44 10h10v2h-10zM44 12h2v2h-2zM44 14h2v2h-2zM52 14h2v2h-2zM46 16h6v2h-6zM62 6h2v2h-2zM62 8h2v2h-2zM62 14h2v2h-2zM62 16h2v2h-2zM88 2h6v2h-6zM86 4h2v2h-2zM94 4h2v2h-2zM86 6h2v2h-2zM94 6h2v2h-2zM86 8h2v2h-2zM90 8h2v2h-2zM94 8h2v2h-2zM86 10h2v2h-2zM90 10h2v2h-2zM94 10h2v2h-2zM86 12h2v2h-2zM94 12h2v2h-2zM86 14h2v2h-2zM94 14h2v2h-2zM88 16h6v2h-6zM102 14h2v2h-2zM102 16h2v2h-2zM116 2h6v2h-6zM114 4h2v2h-2zM122 4h2v2h-2zM122 6h2v2h-2zM120 8h2v2h-2zM118 10h2v2h-2zM116 12h2v2h-2zM114 14h2v2h-2zM114 16h10v2h-10zM130 2h6v2h-6zM128 4h2v2h-2zM136 4h2v2h-2zM136 6h2v2h-2zM132 8h4v2h-4zM136 10h2v2h-2zM136 12h2v2h-2zM128 14h2v2h-2zM136 14h2v2h-2zM130 16h6v2h-6z"/></svg>
<div class="r" style="left:241px;top:1241px;width:368px;height:152px;border-radius:8px;background:rgb(50,50,50);overflow:hidden"><div class="r" style="left:0;top:0;width:100%;height:57px;background:rgb(14,111,193)"></div></div>
<div class="r" style="left:240px;top:1240px;width:366px;height:150px;border:2px solid rgba(105,105,110,0.72);border-radius:9px"></div>
<svg class="r" style="left:256px;top:1260px" width="112" height="24" shape-rendering="crispEdges"><path fill="#fff" d="M6 2h6v2h-6zM4 4h2v2h-2zM12 4h2v2h-2zM2 6h2v2h-2zM2 8h2v2h-2zM2 10h2v2h-2zM2 12h2v2h-2zM4 14h2v2h-2zM12 14h2v2h-2zM6 16h6v2h-6zM18 6h6v2h-6zM16 8h2v2h-2zM24 8h2v2h-2zM16 10h2v2h-2zM24 10h2v2h-2zM16 12h2v2h-2zM24 12h2v2h-2zM16 14h2v2h-2zM24 14h2v2h-2zM18 16h6v2h-6zM30 6h8v2h-8zM30 8h2v2h-2zM38 8h2v2h-2zM30 10h2v2h-2zM38 10h2v2h-2zM30 12h2v2h-2zM38 12h2v2h-2zM30 14h2v2h-2zM38 14h2v2h-2zM30 16h2v2h-2zM38 16h2v2h-2zM46 6h8v2h-8zM44 8h2v2h-2zM46 10h4v2h-4zM50 12h2v2h-2zM52 14h2v2h-2zM44 16h8v2h-8zM60 2h2v2h-2zM60 4h2v2h-2zM60 6h8v2h-8zM60 8h2v2h-2zM60 10h2v2h-2zM60 12h2v2h-2zM60 14h2v2h-2zM62 16h6v2h-6zM74 6h6v2h-6zM80 8h2v2h-2zM74 10h8v2h-8zM72 12h2v2h-2zM80 12h2v2h-2zM72 14h2v2h-2zM80 14h2v2h-2zM74 16h8v2h-8zM86 6h8v2h-8zM86 8h2v2h-2zM94 8h2v2h-2zM86 10h2v2h-2zM94 10h2v2h-2zM86 12h2v2h-2zM94 12h2v2h-2zM86 14h2v2h-2zM94 14h2v2h-2zM86 16h2v2h-2zM94 16h2v2h-2zM102 2h2v2h-2zM102 4h2v2h-2zM102 6h8v2h-8zM102 8h2v2h-2zM102 10h2v2h-2zM102 12h2v2h-2zM102 14h2v2h-2zM104 16h6v2h-6z"/></svg>
<div class="r" style="left:256px;top:1314px;width:260px;height:30px;background:rgb(45,63,89);"></div>
<div class="r" style="left:284px;top:1318px;width:20px;height:22px;background:rgb(61,133,224);"></div>
<svg class="r" style="left:358px;top:1320px" width="56" height="24" shape-rendering="crispEdges"><path fill="#fff" d="M4 2h6v2h-6zM2 4h2v2h-2zM10 4h2v2h-2zM2 6h2v2h-2zM10 6h2v2h-2zM2 8h2v2h-2zM6 8h2v2h-2zM10 8h2v2h-2zM2 10h2v2h-2zM6 10h2v2h-2zM10 10h2v2h-2zM2 12h2v2h-2zM10 12h2v2h-2zM2 14h2v2h-2zM10 14h2v2h-2zM4 16h6v2h-6zM18 14h2v2h-2zM18 16h2v2h-2zM34 2h2v2h-2zM32 4h4v2h-4zM30 6h2v2h-2zM34 6h2v2h-2zM34 8h2v2h-2zM34 10h2v2h-2zM34 12h2v2h-2zM34 14h2v2h-2zM30 16h10v2h-10zM46 2h6v2h-6zM44 4h2v2h-2zM52 4h2v2h-2zM44 6h2v2h-2zM52 6h2v2h-2zM44 8h2v2h-2zM48 8h2v2h-2zM52 8h2v2h-2zM44 10h2v2h-2zM48 10h2v2h-2zM52 10h2v2h-2zM44 12h2v2h-2zM52 12h2v2h-2zM44 14h2v2h-2zM52 14h2v2h-2zM46 16h6v2h-6z"/></svg>
<svg class="r" style="left:524px;top:1320px" width="70" height="24" shape-rendering="crispEdges"><path fill="#fff" d="M2 6h2v2h-2zM10 6h2v2h-2zM2 8h2v2h-2zM10 8h2v2h-2zM4 10h2v2h-2zM8 10h2v2h-2zM4 12h2v2h-2zM8 12h2v2h-2zM6 14h2v2h-2zM6 16h2v2h-2zM18 6h6v2h-6zM24 8h2v2h-2zM18 10h8v2h-8zM16 12h2v2h-2zM24 12h2v2h-2zM16 14h2v2h-2zM24 14h2v2h-2zM18 16h8v2h-8zM32 0h4v2h-4zM34 2h2v2h-2zM34 4h2v2h-2zM34 6h2v2h-2zM34 8h2v2h-2zM34 10h2v2h-2zM34 12h2v2h-2zM34 14h2v2h-2zM34 16h2v2h-2zM44 6h2v2h-2zM52 6h2v2h-2zM44 8h2v2h-2zM52 8h2v2h-2zM44 10h2v2h-2zM52 10h2v2h-2zM44 12h2v2h-2zM52 12h2v2h-2zM44 14h2v2h-2zM52 14h2v2h-2zM46 16h8v2h-8zM60 6h6v2h-6zM58 8h2v2h-2zM66 8h2v2h-2zM58 10h10v2h-10zM58 12h2v2h-2zM58 14h2v2h-2zM66 14h2v2h-2zM60 16h6v2h-6z"/></svg>
<svg class="r" style="left:256px;top:1356px" width="84" height="24" shape-rendering="crispEdges"><path fill="#fff" d="M4 6h6v2h-6zM2 8h2v2h-2zM10 8h2v2h-2zM2 10h2v2h-2zM10 10h2v2h-2zM2 12h2v2h-2zM10 12h2v2h-2zM2 14h2v2h-2zM10 14h2v2h-2zM4 16h6v2h-6zM16 6h2v2h-2zM24 6h2v2h-2zM16 8h2v2h-2zM24 8h2v2h-2zM16 10h2v2h-2zM24 10h2v2h-2zM16 12h2v2h-2zM24 12h2v2h-2zM16 14h2v2h-2zM24 14h2v2h-2zM18 16h8v2h-8zM32 2h2v2h-2zM32 4h2v2h-2zM32 6h8v2h-8zM32 8h2v2h-2zM32 10h2v2h-2zM32 12h2v2h-2zM32 14h2v2h-2zM34 16h6v2h-6zM44 6h8v2h-8zM44 8h2v2h-2zM52 8h2v2h-2zM44 10h2v2h-2zM52 10h2v2h-2zM44 12h2v2h-2zM52 12h2v2h-2zM44 14h2v2h-2zM52 14h2v2h-2zM44 16h8v2h-8zM44 18h2v2h-2zM44 20h2v2h-2zM44 22h2v2h-2zM58 6h2v2h-2zM66 6h2v2h-2zM58 8h2v2h-2zM66 8h2v2h-2zM58 10h2v2h-2zM66 10h2v2h-2zM58 12h2v2h-2zM66 12h2v2h-2zM58 14h2v2h-2zM66 14h2v2h-2zM60 16h8v2h-8zM74 2h2v2h-2zM74 4h2v2h-2zM74 6h8v2h-8zM74 8h2v2h-2zM74 10h2v2h-2zM74 12h2v2h-2zM74 14h2v2h-2zM76 16h6v2h-6z"/></svg>
<div class="r" style="left:968.0px;top:669.0px;width:16px;height:16px;border-radius:8px;background:rgba(96,106,172,0.62)"></div>
<div class="r" style="left:428.0px;top:807.0px;width:16px;height:16px;border-radius:8px;background:rgba(96,106,172,0.62)"></div>
<div class="r" style="left:777.0px;top:1000.0px;width:14px;height:14px;background:rgba(96,106,172,0.62)"></div>
<div class="r" style="left:962.0px;top:1033.0px;width:16px;height:16px;border-radius:8px;background:rgba(96,106,172,0.62)"></div>
<div class="r" style="left:1081.0px;top:1212.0px;width:14px;height:14px;background:rgba(96,106,172,0.62)"></div>
<div class="r" style="left:1266.0px;top:1279.0px;width:16px;height:16px;border-radius:8px;background:rgba(96,106,172,0.62)"></div>
<div class="r" style="left:1451.0px;top:896.0px;width:14px;height:14px;background:rgba(96,106,172,0.62)"></div>
<div class="r" style="left:1636.0px;top:963.0px;width:16px;height:16px;border-radius:8px;background:rgba(96,106,172,0.62)"></div>
<div class="r" style="left:2380.0px;top:812.0px;width:14px;height:14px;background:rgba(96,106,172,0.62)"></div>
<div class="r" style="left:2380.0px;top:846.0px;width:14px;height:14px;background:rgba(96,106,172,0.62)"></div>
<div class="r" style="left:2380.0px;top:880.0px;width:14px;height:14px;background:rgba(96,106,172,0.62)"></div>
<div class="r" style="left:602.0px;top:1357.0px;width:16px;height:16px;border-radius:8px;background:rgba(96,106,172,0.62)"></div>
</body></html>
